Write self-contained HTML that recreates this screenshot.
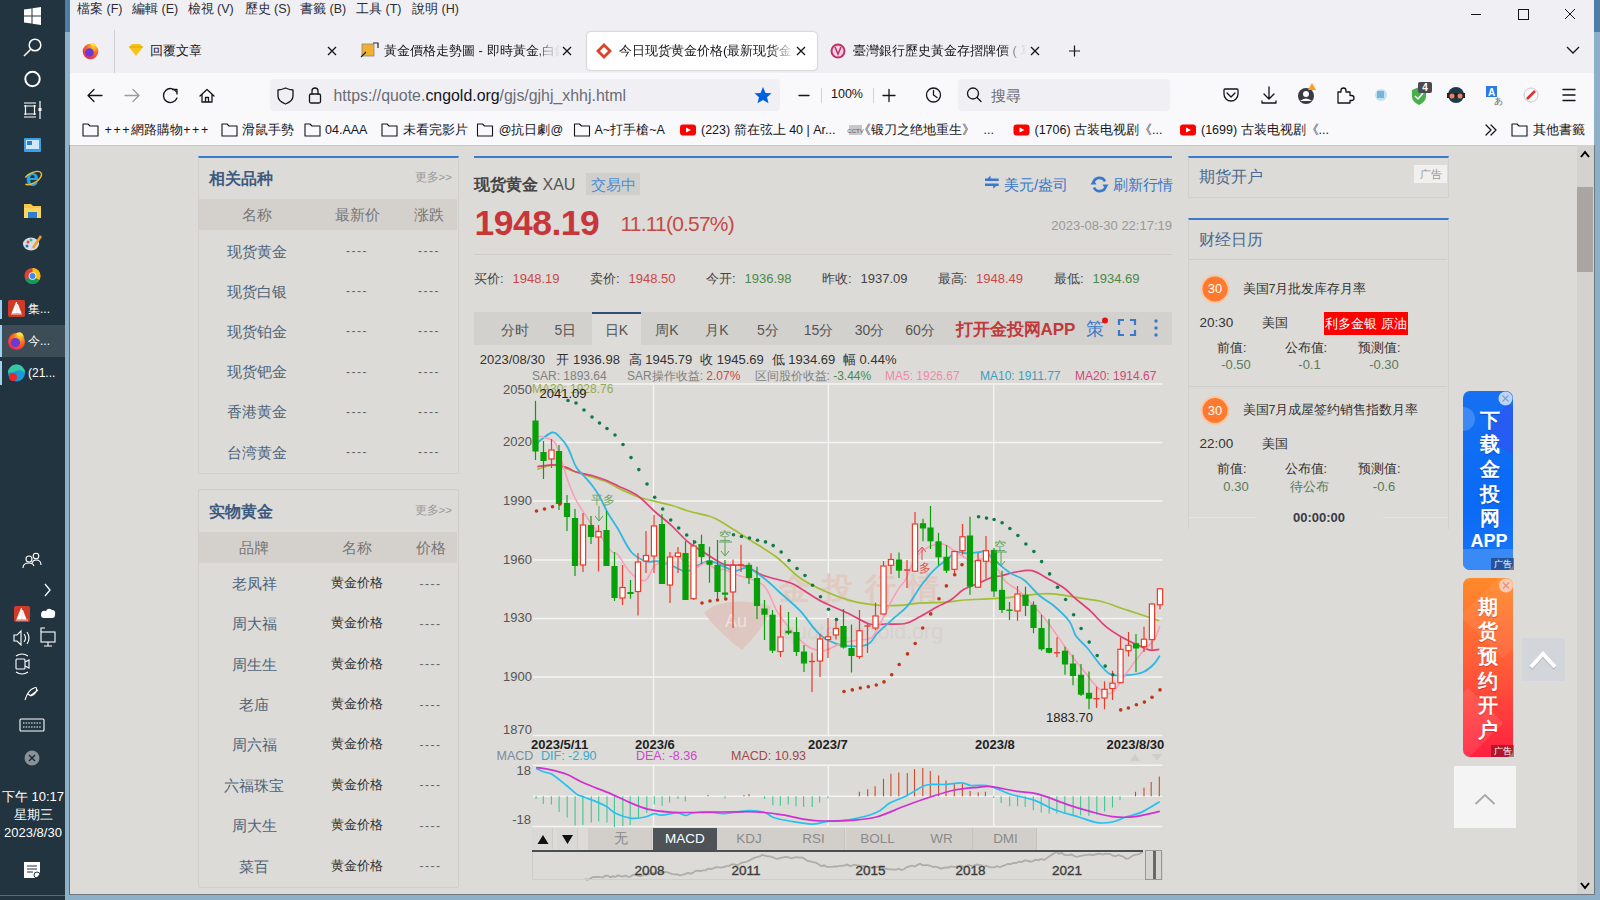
<!DOCTYPE html>
<html><head><meta charset="utf-8"><title>recreation</title>
<style>
html,body{margin:0;padding:0;width:1600px;height:900px;overflow:hidden;background:#dcdbd7;font-family:"Liberation Sans", sans-serif;}
.t{position:absolute;white-space:nowrap;font-family:"Liberation Sans", sans-serif;}
.r{position:absolute;}
</style></head><body>
<div class="r" style="left:0px;top:0px;width:65px;height:900px;background:#213440;"></div>
<div class="r" style="left:65px;top:0px;width:5px;height:900px;background:#8fb1c7;"></div>
<div class="r" style="left:65px;top:0px;width:5px;height:32px;background:#4c7ea6;"></div>
<div class="r" style="left:69px;top:145px;width:1px;height:749px;background:#5a6a74;"></div>
<svg style="position:absolute;left:0;top:0" width="70" height="900">
<g fill="#fff">
<path d="M24,9.5 L31.5,8.5 V15.5 H24 Z M32.5,8.3 L41,7 V15.5 H32.5 Z M24,16.5 H31.5 V23.5 L24,22.5 Z M32.5,16.5 H41 V25 L32.5,23.7 Z"/>
</g>
<g fill="none" stroke="#fff" stroke-width="1.5">
<circle cx="35" cy="45" r="5.8"/><path d="M30.8,49.2 L24,56"/>
<circle cx="32.5" cy="79" r="7.2" stroke-width="2"/>
<path d="M24,103 H36 M24,117 H36 M25.5,105 V115 M34.5,105 V115 M24,106 H36 M24,114 H36" stroke-width="1.2"/>
<path d="M40,101 V119" stroke-width="1.2"/><rect x="38.5" y="108" width="3" height="3" fill="#fff" stroke="none"/>
</g>
<!-- control panel icon -->
<rect x="24" y="138" width="17" height="14" rx="1" fill="#3ba0e6"/><rect x="26" y="140" width="13" height="9" fill="#cfe8fb"/><rect x="27" y="141" width="5" height="4" fill="#2a7fc8"/>
<!-- IE -->
<text x="32.5" y="186" font-family="Liberation Sans" font-size="23" font-weight="bold" fill="#2aa6e6" text-anchor="middle">e</text>
<ellipse cx="32.5" cy="178" rx="10" ry="5" transform="rotate(-30 32.5 178)" fill="none" stroke="#f0c030" stroke-width="1.4" stroke-dasharray="22 8"/>
<!-- folder -->
<path d="M24,204 H31 L33,206 H41 V218 H24 Z" fill="#f6c84a"/><rect x="24" y="208" width="17" height="10" fill="#fbd760"/><rect x="28" y="212" width="9" height="6" fill="#2f7fd0"/>
<!-- paint -->
<ellipse cx="31" cy="244" rx="8" ry="6.5" fill="#d8dde2"/><circle cx="28" cy="242" r="1.5" fill="#e44"/><circle cx="31" cy="240" r="1.5" fill="#3b8"/><circle cx="27" cy="246" r="1.5" fill="#36c"/><path d="M33,248 L41,236" stroke="#e8a030" stroke-width="2.5"/>
<!-- chrome -->
<circle cx="32.5" cy="276" r="8" fill="#db4437"/><path d="M32.5,276 L25.6,280 A8,8 0 0 0 39.4,280 Z" fill="#0f9d58"/><path d="M32.5,268 A8,8 0 0 1 39.4,280 L32.5,276 Z" fill="#f4c20d"/><circle cx="32.5" cy="276" r="3.8" fill="#fff"/><circle cx="32.5" cy="276" r="3" fill="#4285f4"/>
</svg>
<div class="r" style="left:0px;top:300px;width:2px;height:19px;background:#9fd0f0;"></div>
<div class="r" style="left:0px;top:325px;width:65px;height:32px;background:#3c4d58;"></div>
<div class="r" style="left:0px;top:325px;width:2px;height:32px;background:#9fd0f0;"></div>
<div class="r" style="left:0px;top:361px;width:2px;height:24px;background:#9fd0f0;"></div>
<svg style="position:absolute;left:0;top:0" width="70" height="900">
<rect x="8" y="300" width="17" height="17" rx="2" fill="#d23a28"/><path d="M11,314 H22 M16.5,302 V313 L12,313 Z M17.5,304 L21,313 H17.5 Z" fill="#fff" stroke="#fff" stroke-width="0.8"/>
<defs><radialGradient id="ffg2" cx="0.7" cy="0.2" r="0.9"><stop offset="0" stop-color="#ffd030"/><stop offset="0.45" stop-color="#ff6a20"/><stop offset="1" stop-color="#e8205a"/></radialGradient></defs>
<circle cx="16.5" cy="341.5" r="8.5" fill="url(#ffg2)"/><circle cx="15.5" cy="342.5" r="4.6" fill="#6a3ad8"/><path d="M16,333.5 Q22,330 24,337 Q21,335 18,336 Z" fill="#ffe040"/>
<circle cx="16.5" cy="373" r="8.5" fill="#1a9ad8"/><path d="M8,373 A8.5,8.5 0 0 1 25,373 Q20,368 14,372 Z" fill="#36c8a0"/><circle cx="13" cy="377" r="4" fill="#e8282a"/>
</svg>
<div class="t" style="top:301.0px;font-size:12px;line-height:16px;color:#fff;left:28.0px;">集...</div>
<div class="t" style="top:333.0px;font-size:12px;line-height:16px;color:#fff;left:28.0px;">今...</div>
<div class="t" style="top:365.0px;font-size:12px;line-height:16px;color:#fff;left:28.0px;">(21...</div>
<svg style="position:absolute;left:0;top:0" width="70" height="900">
<g fill="none" stroke="#fff" stroke-width="1.1">
<circle cx="29" cy="559" r="3"/><path d="M23,568 Q23,563 29,563 Q33,563 34,566"/><circle cx="36" cy="556" r="2.8"/><path d="M32,563 Q33,560 36,560 Q41,560 41,565"/>
<path d="M45,584 L50,590 L45,596" stroke-width="1.3"/>
<path d="M14,635 H17 L21,631 V645 L17,641 H14 Z"/><path d="M24,634 Q27,638 24,642 M27,632 Q31,638 27,644"/>
<rect x="41" y="632" width="14" height="10"/><path d="M48,642 V646 M44,646 H52 M41,632 V628 H45"/>
<path d="M16,656 Q22,652 28,656 M16,672 Q22,676 28,672"/><rect x="16" y="659" width="9" height="10" rx="1"/><path d="M25,662 L29,660 V668 L25,666"/>
<path d="M25,700 Q28,690 34,688 Q38,686 36,692 Q32,698 28,694 M30,696 L38,690"/>
<rect x="20" y="719" width="24" height="12" rx="1"/><path d="M23,723 H41 M23,727 H41" stroke-dasharray="1.5 1.2"/>
</g>
<path d="M41,615 Q41,610 46,611 Q48,607 52,610 Q56,610 55,615 Q55,618 52,618 H44 Q41,618 41,615 Z" fill="#fff"/>
<rect x="14" y="606" width="16" height="16" rx="2" fill="#d23a28"/><path d="M21.5,608 V619 L17,619 Z M22.5,610 L26,619 H22.5 Z M16,620 H28" fill="#fff" stroke="#fff" stroke-width="0.8"/>
<circle cx="32" cy="758" r="7.5" fill="#8a9298"/><path d="M29,755 L35,761 M35,755 L29,761" stroke="#1f313e" stroke-width="1.6"/>
<path d="M24,862 H40 V874 L36,878 H24 Z" fill="#fff"/><path d="M27,866 H37 M27,869 H37 M27,872 H33" stroke="#1f313e" stroke-width="1"/><circle cx="37" cy="875" r="3" fill="none" stroke="#1f313e" stroke-width="1"/>
</svg>
<div class="t" style="top:788.0px;font-size:13px;line-height:18px;color:#fff;left:-267.0px;width:600px;text-align:center;">下午 10:17</div>
<div class="t" style="top:806.0px;font-size:13px;line-height:18px;color:#fff;left:-267.0px;width:600px;text-align:center;">星期三</div>
<div class="t" style="top:824.0px;font-size:13px;line-height:18px;color:#fff;left:-267.0px;width:600px;text-align:center;">2023/8/30</div>
<div class="r" style="left:0px;top:895px;width:65px;height:1px;background:#5a6a74;"></div>
<div class="r" style="left:70px;top:0px;width:1524px;height:73px;background:#f0f0f4;"></div>
<div class="r" style="left:70px;top:73px;width:1524px;height:72px;background:#f9f9fb;"></div>
<div class="r" style="left:1594px;top:0px;width:6px;height:900px;background:#8db0c8;"></div>
<div class="r" style="left:1594px;top:0px;width:6px;height:32px;background:#4c7ea6;"></div>
<div class="r" style="left:70px;top:894px;width:1530px;height:6px;background:#8db0c8;"></div>
<div class="r" style="left:69px;top:894px;width:1526px;height:1px;background:#707880;"></div>
<div class="t" style="top:1.0px;font-size:12.5px;line-height:17px;color:#2b2a33;left:77.0px;">檔案 (F)</div>
<div class="t" style="top:1.0px;font-size:12.5px;line-height:17px;color:#2b2a33;left:132.0px;">編輯 (E)</div>
<div class="t" style="top:1.0px;font-size:12.5px;line-height:17px;color:#2b2a33;left:187.5px;">檢視 (V)</div>
<div class="t" style="top:1.0px;font-size:12.5px;line-height:17px;color:#2b2a33;left:244.5px;">歷史 (S)</div>
<div class="t" style="top:1.0px;font-size:12.5px;line-height:17px;color:#2b2a33;left:300.0px;">書籤 (B)</div>
<div class="t" style="top:1.0px;font-size:12.5px;line-height:17px;color:#2b2a33;left:356.0px;">工具 (T)</div>
<div class="t" style="top:1.0px;font-size:12.5px;line-height:17px;color:#2b2a33;left:412.0px;">說明 (H)</div>
<svg style="position:absolute;left:0;top:0" width="1600" height="150">
<g fill="none" stroke="#15141a" stroke-width="1">
<path d="M1471,14.5 H1481"/><rect x="1518.5" y="9.5" width="10" height="10"/><path d="M1565,9 L1575,19 M1575,9 L1565,19"/>
<path d="M1567,47 L1573,53 L1579,47" stroke-width="1.3"/>
<path d="M1069,51 H1080 M1074.5,45.5 V56.5" stroke-width="1.2"/>
</g>
<!-- firefox icon -->
<defs><radialGradient id="ffg" cx="0.7" cy="0.2" r="0.9"><stop offset="0" stop-color="#ffd030"/><stop offset="0.45" stop-color="#ff6a20"/><stop offset="1" stop-color="#e8205a"/></radialGradient></defs>
<circle cx="90.5" cy="51.5" r="7.8" fill="url(#ffg)"/><circle cx="89.5" cy="52.5" r="4.3" fill="#6a3ad8"/><path d="M90,44 Q95,41 97,47 Q94,45 92,46 Z" fill="#ffe040"/>
<line x1="114.5" y1="30" x2="114.5" y2="73" stroke="#d0d0d6"/>
</svg>
<div class="r" style="left:587px;top:32px;width:230px;height:38px;background:#fff;border-radius:4px;box-shadow:0 0 2px rgba(0,0,0,0.35)"></div>
<svg style="position:absolute;left:0;top:0" width="1600" height="150">
<path d="M129,47 L132,44 H140 L143,47 L136,56 Z" fill="#f5c518"/><path d="M129,47 H143" stroke="#e0a000" stroke-width="0.8"/>
<rect x="362" y="44" width="12" height="12" fill="#f0b030" stroke="#888" stroke-width="0.8"/><path d="M361,57 L366,52 M373,43 L378,43 L378,48" stroke="#222" stroke-width="1.2" fill="none"/>
<path d="M604,43 L612,51 L604,59 L596,51 Z" fill="#d8452a"/><path d="M604,47 L608,51 L604,55 L600,51 Z" fill="#fff"/>
<circle cx="838" cy="51" r="7.5" fill="#c0306a"/><circle cx="838" cy="51" r="5.5" fill="#f6d0e0"/><path d="M835,47 L838,54 L841,47" stroke="#c0306a" stroke-width="1.5" fill="none"/>
<g stroke="#15141a" stroke-width="1.3">
<path d="M328,47 L336,55 M336,47 L328,55"/>
<path d="M563,47 L571,55 M571,47 L563,55"/>
<path d="M797,47 L805,55 M805,47 L797,55"/>
<path d="M1031,47 L1039,55 M1039,47 L1031,55"/>
</g>
</svg>
<div class="t" style="top:42.0px;font-size:13px;line-height:18px;color:#15141a;left:150.0px;">回覆文章</div>
<div class="t" style="left:384px;top:42px;width:176px;overflow:hidden;font-size:13px;line-height:18px;color:#15141a;-webkit-mask-image:linear-gradient(90deg,#000 85%,transparent)">黃金價格走勢圖 - 即時黃金,白銀價格</div>
<div class="t" style="left:619px;top:42px;width:176px;overflow:hidden;font-size:13px;line-height:18px;color:#15141a;-webkit-mask-image:linear-gradient(90deg,#000 85%,transparent)">今日现货黄金价格(最新现货金行情</div>
<div class="t" style="left:853px;top:42px;width:174px;overflow:hidden;font-size:13px;line-height:18px;color:#15141a;-webkit-mask-image:linear-gradient(90deg,#000 85%,transparent)">臺灣銀行歷史黃金存摺牌價 ( 單位</div>
<div class="r" style="left:270px;top:79px;width:510px;height:32px;background:#f0f0f4;border-radius:4px"></div>
<div class="r" style="left:958px;top:79px;width:212px;height:32px;background:#f0f0f4;border-radius:4px"></div>
<svg style="position:absolute;left:0;top:0" width="1600" height="150">
<g fill="none" stroke="#15141a" stroke-width="1.3" stroke-linecap="round" stroke-linejoin="round">
<path d="M102,95.5 H88 M94,89.5 L88,95.5 L94,101.5"/>
<path d="M125,95.5 H139 M133,89.5 L139,95.5 L133,101.5" stroke="#9a9aa0"/>
<path d="M176.5,92 A7,7 0 1 0 177,98" /><path d="M172.5,89.5 H177 V94"/>
<path d="M200,96 L207,89.5 L214,96 M202,94.5 V102 H212 V94.5 M205.5,102 V97.5 H208.5 V102"/>
<path d="M285.5,88 Q290,90 293,90 V96 Q293,101 285.5,104 Q278,101 278,96 V90 Q281,90 285.5,88 Z"/>
<rect x="309.5" y="94" width="11" height="9" rx="1.5"/><path d="M312,94 V91 A3,3 0 0 1 318,91 V94"/>
<path d="M799,95.5 H809"/>
<path d="M883,95.5 H895 M889,89.5 V101.5"/>
<circle cx="933.5" cy="95" r="7"/><path d="M933.5,90.5 V95 L937,97.5"/>
<circle cx="973" cy="93.5" r="5.5"/><path d="M977,97.5 L981,101.5"/>
<path d="M1225,89 H1237 Q1238,89 1238,90 V94 A6.5,6.5 0 0 1 1224,94 V90 Q1224,89 1225,89 Z M1227,93 L1231,97 L1235,93"/>
<path d="M1269,87 V99 M1264,94 L1269,99 L1274,94 M1262,101 V103 H1276 V101"/>
<path d="M1338,103 V92 H1341 V90.5 A2.5,2.5 0 0 1 1346,90.5 V92 H1350 V95.5 H1351.5 A2.5,2.5 0 0 1 1351.5,100.5 H1350 V103 Z"/>
<path d="M1563,89.5 H1575 M1563,95 H1575 M1563,100.5 H1575" stroke-width="1.4"/>
<path d="M1486,125 L1491,130 L1486,135 M1491,125 L1496,130 L1491,135"/>
</g>
<path d="M763,87 L765.5,93 L771.5,93.3 L767,97.3 L768.5,103.3 L763,100 L757.5,103.3 L759,97.3 L754.5,93.3 L760.5,93 Z" fill="#0061e0"/>
<line x1="821.5" y1="88" x2="821.5" y2="103" stroke="#d0d0d6"/><line x1="873.5" y1="88" x2="873.5" y2="103" stroke="#d0d0d6"/>
<!-- account with orange -->
<circle cx="1306" cy="96" r="8" fill="#3a3a44"/><circle cx="1306" cy="94" r="3" fill="#f9f9fb"/><path d="M1300,101 Q1306,96 1312,101" fill="#f9f9fb"/><path d="M1312,83 L1316,90 H1308 Z" fill="#ff9a1a"/>
<!-- translate ghost -->
<circle cx="1381" cy="95" r="6" fill="#9fd0e8" opacity="0.6"/><rect x="1377" y="91" width="7" height="7" fill="#5aa0d8" opacity="0.7"/>
<!-- shield green -->
<path d="M1419,87 L1426,90 V96 Q1426,102 1419,105 Q1412,102 1412,96 V90 Z" fill="#46b04a"/><path d="M1415,96 L1418,99 L1423,93" stroke="#fff" stroke-width="1.5" fill="none"/>
<rect x="1418" y="82" width="14" height="11" rx="2" fill="#4a4a50"/><text x="1425" y="91" font-family="Liberation Sans" font-size="10" font-weight="bold" fill="#fff" text-anchor="middle">4</text>
<!-- spy -->
<circle cx="1456" cy="95" r="8" fill="#1a3a4a"/><rect x="1447" y="93" width="18" height="5" fill="#222"/><circle cx="1452" cy="96" r="2.5" fill="#f08060"/><circle cx="1460" cy="96" r="2.5" fill="#f08060"/>
<!-- A translate -->
<rect x="1486" y="86" width="11" height="11" fill="#2a7ae8"/><text x="1491.5" y="95.5" font-family="Liberation Sans" font-size="10" font-weight="bold" fill="#fff" text-anchor="middle">A</text><text x="1498" y="104" font-family="Liberation Sans" font-size="9" fill="#666" text-anchor="middle">あ</text>
<!-- compass -->
<circle cx="1531" cy="95" r="7" fill="none" stroke="#c8c8d0" stroke-width="1"/><path d="M1527,99 L1535,91" stroke="#e03030" stroke-width="2.5"/>
</svg>
<div class="t" style="left:333.5px;top:85.5px;font-size:15.9px;line-height:20px;color:#6b6b74">https://quote.<span style="color:#15141a">cngold.org</span>/gjs/gjhj_xhhj.html</div>
<div class="t" style="top:86.0px;font-size:12.5px;line-height:17px;color:#15141a;left:831.0px;">100%</div>
<div class="t" style="top:84.5px;font-size:15px;line-height:21px;color:#6b6b74;left:991.0px;">搜尋</div>
<svg style="position:absolute;left:0;top:0" width="1600" height="150"><path d="M83,124 H88 L90,126 H98 V136 H83 Z" fill="none" stroke="#15141a" stroke-width="1.1" stroke-linejoin="round"/><path d="M222,124 H227 L229,126 H237 V136 H222 Z" fill="none" stroke="#15141a" stroke-width="1.1" stroke-linejoin="round"/><path d="M305,124 H310 L312,126 H320 V136 H305 Z" fill="none" stroke="#15141a" stroke-width="1.1" stroke-linejoin="round"/><path d="M382,124 H387 L389,126 H397 V136 H382 Z" fill="none" stroke="#15141a" stroke-width="1.1" stroke-linejoin="round"/><path d="M477.5,124 H482.5 L484.5,126 H492.5 V136 H477.5 Z" fill="none" stroke="#15141a" stroke-width="1.1" stroke-linejoin="round"/><path d="M574.5,124 H579.5 L581.5,126 H589.5 V136 H574.5 Z" fill="none" stroke="#15141a" stroke-width="1.1" stroke-linejoin="round"/><path d="M1512,124 H1517 L1519,126 H1527 V136 H1512 Z" fill="none" stroke="#15141a" stroke-width="1.1" stroke-linejoin="round"/><rect x="680" y="124.5" width="16" height="11" rx="3" fill="#ff0000"/><path d="M686,127.5 L691,130 L686,132.5 Z" fill="#fff"/><rect x="1013.5" y="124.5" width="16" height="11" rx="3" fill="#ff0000"/><path d="M1019.5,127.5 L1024.5,130 L1019.5,132.5 Z" fill="#fff"/><rect x="1180" y="124.5" width="16" height="11" rx="3" fill="#ff0000"/><path d="M1186,127.5 L1191,130 L1186,132.5 Z" fill="#fff"/><rect x="849" y="125" width="13" height="10" fill="#c8c8cc"/><text x="855.5" y="133" font-size="6" text-anchor="middle" fill="#555" font-family="Liberation Sans">CCTV</text></svg>
<div class="t" style="top:121.5px;font-size:12.5px;line-height:17px;color:#15141a;left:104.5px;"><span style="letter-spacing:1.6px">+++</span>網路購物<span style="letter-spacing:1.6px">++</span>+</div>
<div class="t" style="top:121.5px;font-size:12.5px;line-height:17px;color:#15141a;left:242.0px;">滑鼠手勢</div>
<div class="t" style="top:121.5px;font-size:12.5px;line-height:17px;color:#15141a;left:325.0px;">04.AAA</div>
<div class="t" style="top:121.5px;font-size:12.5px;line-height:17px;color:#15141a;left:402.5px;">未看完影片</div>
<div class="t" style="top:121.5px;font-size:12.5px;line-height:17px;color:#15141a;left:498.8px;">@抗日劇@</div>
<div class="t" style="top:121.5px;font-size:12.5px;line-height:17px;color:#15141a;left:594.5px;">A~打手槍~A</div>
<div class="t" style="top:121.5px;font-size:12.5px;line-height:17px;color:#15141a;left:701.0px;">(223) 箭在弦上 40 | Ar...</div>
<div class="t" style="top:121.5px;font-size:12.5px;line-height:17px;color:#15141a;left:858.0px;">《锻刀之绝地重生》</div>
<div class="t" style="top:121.5px;font-size:12.5px;line-height:17px;color:#15141a;left:983.5px;">...</div>
<div class="t" style="top:121.5px;font-size:12.5px;line-height:17px;color:#15141a;left:1034.5px;">(1706) 古装电视剧《...</div>
<div class="t" style="top:121.5px;font-size:12.5px;line-height:17px;color:#15141a;left:1201.0px;">(1699) 古装电视剧《...</div>
<div class="t" style="top:121.5px;font-size:12.5px;line-height:17px;color:#15141a;left:1532.5px;">其他書籤</div>
<div class="r" style="left:70px;top:145px;width:1507px;height:749px;background:#dcdbd7;"></div>
<div class="r" style="left:70px;top:145px;width:1507px;height:1px;background:#c8c6c2;"></div>
<div class="r" style="left:1577px;top:145px;width:17px;height:749px;background:#d4d2ce;"></div>
<div class="r" style="left:1577px;top:187px;width:16px;height:85px;background:#a9a5a0;"></div>
<div class="r" style="left:1594px;top:145px;width:1px;height:749px;background:#6a7880;"></div>
<svg style="position:absolute;left:0;top:0" width="1600" height="900">
<path d="M1581,157 L1585,152 L1589,157" fill="none" stroke="#000" stroke-width="2"/>
<path d="M1581,883 L1585,888 L1589,883" fill="none" stroke="#000" stroke-width="2"/>
</svg>
<div class="r" style="left:198px;top:156px;width:259px;height:315px;border:1px solid #d2d0cc;border-top:2px solid #3b7bd0"></div>
<div class="t" style="top:167.5px;font-size:16px;line-height:22px;color:#3c5a80;font-weight:bold;left:208.5px;">相关品种</div>
<div class="t" style="top:169.0px;font-size:11.5px;line-height:16px;color:#9a9a9a;left:414.5px;">更多&gt;&gt;</div>
<div class="r" style="left:199px;top:199px;width:258px;height:31px;background:#d4d1cd;"></div>
<div class="t" style="top:204.0px;font-size:15px;line-height:21px;color:#777;left:-43.0px;width:600px;text-align:center;">名称</div>
<div class="t" style="top:204.0px;font-size:15px;line-height:21px;color:#777;left:57.0px;width:600px;text-align:center;">最新价</div>
<div class="t" style="top:204.0px;font-size:15px;line-height:21px;color:#777;left:129.0px;width:600px;text-align:center;">涨跌</div>
<div class="t" style="top:240.5px;font-size:15px;line-height:21px;color:#4f6479;left:-43.0px;width:600px;text-align:center;">现货黄金</div>
<div class="t" style="top:243.0px;font-size:12px;line-height:16px;color:#666;left:57.0px;width:600px;text-align:center;letter-spacing:1.5px">----</div>
<div class="t" style="top:243.0px;font-size:12px;line-height:16px;color:#666;left:129.0px;width:600px;text-align:center;letter-spacing:1.5px">----</div>
<div class="t" style="top:280.7px;font-size:15px;line-height:21px;color:#4f6479;left:-43.0px;width:600px;text-align:center;">现货白银</div>
<div class="t" style="top:283.2px;font-size:12px;line-height:16px;color:#666;left:57.0px;width:600px;text-align:center;letter-spacing:1.5px">----</div>
<div class="t" style="top:283.2px;font-size:12px;line-height:16px;color:#666;left:129.0px;width:600px;text-align:center;letter-spacing:1.5px">----</div>
<div class="t" style="top:320.9px;font-size:15px;line-height:21px;color:#4f6479;left:-43.0px;width:600px;text-align:center;">现货铂金</div>
<div class="t" style="top:323.4px;font-size:12px;line-height:16px;color:#666;left:57.0px;width:600px;text-align:center;letter-spacing:1.5px">----</div>
<div class="t" style="top:323.4px;font-size:12px;line-height:16px;color:#666;left:129.0px;width:600px;text-align:center;letter-spacing:1.5px">----</div>
<div class="t" style="top:361.1px;font-size:15px;line-height:21px;color:#4f6479;left:-43.0px;width:600px;text-align:center;">现货钯金</div>
<div class="t" style="top:363.6px;font-size:12px;line-height:16px;color:#666;left:57.0px;width:600px;text-align:center;letter-spacing:1.5px">----</div>
<div class="t" style="top:363.6px;font-size:12px;line-height:16px;color:#666;left:129.0px;width:600px;text-align:center;letter-spacing:1.5px">----</div>
<div class="t" style="top:401.3px;font-size:15px;line-height:21px;color:#4f6479;left:-43.0px;width:600px;text-align:center;">香港黄金</div>
<div class="t" style="top:403.8px;font-size:12px;line-height:16px;color:#666;left:57.0px;width:600px;text-align:center;letter-spacing:1.5px">----</div>
<div class="t" style="top:403.8px;font-size:12px;line-height:16px;color:#666;left:129.0px;width:600px;text-align:center;letter-spacing:1.5px">----</div>
<div class="t" style="top:441.5px;font-size:15px;line-height:21px;color:#4f6479;left:-43.0px;width:600px;text-align:center;">台湾黄金</div>
<div class="t" style="top:444.0px;font-size:12px;line-height:16px;color:#666;left:57.0px;width:600px;text-align:center;letter-spacing:1.5px">----</div>
<div class="t" style="top:444.0px;font-size:12px;line-height:16px;color:#666;left:129.0px;width:600px;text-align:center;letter-spacing:1.5px">----</div>
<div class="r" style="left:198px;top:489px;width:259px;height:397px;border:1px solid #d0cec9;border-radius:2px"></div>
<div class="t" style="top:500.5px;font-size:16px;line-height:22px;color:#3c5a80;font-weight:bold;left:208.5px;">实物黄金</div>
<div class="t" style="top:502.0px;font-size:11.5px;line-height:16px;color:#9a9a9a;left:414.5px;">更多&gt;&gt;</div>
<div class="r" style="left:199px;top:532px;width:258px;height:31px;background:#d4d1cd;"></div>
<div class="t" style="top:537.0px;font-size:15px;line-height:21px;color:#777;left:-46.0px;width:600px;text-align:center;">品牌</div>
<div class="t" style="top:537.0px;font-size:15px;line-height:21px;color:#777;left:56.5px;width:600px;text-align:center;">名称</div>
<div class="t" style="top:537.0px;font-size:15px;line-height:21px;color:#777;left:130.5px;width:600px;text-align:center;">价格</div>
<div class="t" style="top:573.0px;font-size:15px;line-height:21px;color:#4f6479;left:-46.0px;width:600px;text-align:center;">老凤祥</div>
<div class="t" style="top:575.0px;font-size:12.5px;line-height:17px;color:#333;left:56.5px;width:600px;text-align:center;">黄金价格</div>
<div class="t" style="top:575.5px;font-size:12px;line-height:16px;color:#666;left:130.5px;width:600px;text-align:center;letter-spacing:1.5px">----</div>
<div class="t" style="top:613.4px;font-size:15px;line-height:21px;color:#4f6479;left:-46.0px;width:600px;text-align:center;">周大福</div>
<div class="t" style="top:615.4px;font-size:12.5px;line-height:17px;color:#333;left:56.5px;width:600px;text-align:center;">黄金价格</div>
<div class="t" style="top:615.9px;font-size:12px;line-height:16px;color:#666;left:130.5px;width:600px;text-align:center;letter-spacing:1.5px">----</div>
<div class="t" style="top:653.7px;font-size:15px;line-height:21px;color:#4f6479;left:-46.0px;width:600px;text-align:center;">周生生</div>
<div class="t" style="top:655.7px;font-size:12.5px;line-height:17px;color:#333;left:56.5px;width:600px;text-align:center;">黄金价格</div>
<div class="t" style="top:656.2px;font-size:12px;line-height:16px;color:#666;left:130.5px;width:600px;text-align:center;letter-spacing:1.5px">----</div>
<div class="t" style="top:694.0px;font-size:15px;line-height:21px;color:#4f6479;left:-46.0px;width:600px;text-align:center;">老庙</div>
<div class="t" style="top:696.0px;font-size:12.5px;line-height:17px;color:#333;left:56.5px;width:600px;text-align:center;">黄金价格</div>
<div class="t" style="top:696.5px;font-size:12px;line-height:16px;color:#666;left:130.5px;width:600px;text-align:center;letter-spacing:1.5px">----</div>
<div class="t" style="top:734.4px;font-size:15px;line-height:21px;color:#4f6479;left:-46.0px;width:600px;text-align:center;">周六福</div>
<div class="t" style="top:736.4px;font-size:12.5px;line-height:17px;color:#333;left:56.5px;width:600px;text-align:center;">黄金价格</div>
<div class="t" style="top:736.9px;font-size:12px;line-height:16px;color:#666;left:130.5px;width:600px;text-align:center;letter-spacing:1.5px">----</div>
<div class="t" style="top:774.8px;font-size:15px;line-height:21px;color:#4f6479;left:-46.0px;width:600px;text-align:center;">六福珠宝</div>
<div class="t" style="top:776.8px;font-size:12.5px;line-height:17px;color:#333;left:56.5px;width:600px;text-align:center;">黄金价格</div>
<div class="t" style="top:777.2px;font-size:12px;line-height:16px;color:#666;left:130.5px;width:600px;text-align:center;letter-spacing:1.5px">----</div>
<div class="t" style="top:815.1px;font-size:15px;line-height:21px;color:#4f6479;left:-46.0px;width:600px;text-align:center;">周大生</div>
<div class="t" style="top:817.1px;font-size:12.5px;line-height:17px;color:#333;left:56.5px;width:600px;text-align:center;">黄金价格</div>
<div class="t" style="top:817.6px;font-size:12px;line-height:16px;color:#666;left:130.5px;width:600px;text-align:center;letter-spacing:1.5px">----</div>
<div class="t" style="top:855.5px;font-size:15px;line-height:21px;color:#4f6479;left:-46.0px;width:600px;text-align:center;">菜百</div>
<div class="t" style="top:857.5px;font-size:12.5px;line-height:17px;color:#333;left:56.5px;width:600px;text-align:center;">黄金价格</div>
<div class="t" style="top:858.0px;font-size:12px;line-height:16px;color:#666;left:130.5px;width:600px;text-align:center;letter-spacing:1.5px">----</div>
<svg width="1600" height="900" style="position:absolute;left:0;top:0">
<line x1="532.5" y1="384" x2="1162.5" y2="384" stroke="#f4f4f2" stroke-width="1.4"/>
<line x1="532.5" y1="442.5" x2="1162.5" y2="442.5" stroke="#f4f4f2" stroke-width="1.4"/>
<line x1="532.5" y1="501" x2="1162.5" y2="501" stroke="#f4f4f2" stroke-width="1.4"/>
<line x1="532.5" y1="560" x2="1162.5" y2="560" stroke="#f4f4f2" stroke-width="1.4"/>
<line x1="532.5" y1="618.5" x2="1162.5" y2="618.5" stroke="#f4f4f2" stroke-width="1.4"/>
<line x1="532.5" y1="677" x2="1162.5" y2="677" stroke="#f4f4f2" stroke-width="1.4"/>
<line x1="532.5" y1="735.5" x2="1162.5" y2="735.5" stroke="#f4f4f2" stroke-width="1.4"/>
<line x1="653.5" y1="384" x2="653.5" y2="735.5" stroke="#f4f4f2" stroke-width="1.4"/>
<line x1="828.3" y1="384" x2="828.3" y2="735.5" stroke="#f4f4f2" stroke-width="1.4"/>
<line x1="993.8" y1="384" x2="993.8" y2="735.5" stroke="#f4f4f2" stroke-width="1.4"/>
<line x1="532.5" y1="765.3" x2="1162.5" y2="765.3" stroke="#f4f4f2" stroke-width="1.4"/>
<line x1="532.5" y1="796.3" x2="1162.5" y2="796.3" stroke="#f4f4f2" stroke-width="1.4"/>
<line x1="532.5" y1="826.5" x2="1162.5" y2="826.5" stroke="#f4f4f2" stroke-width="1.4"/>
<line x1="653.5" y1="765.3" x2="653.5" y2="826.5" stroke="#f4f4f2" stroke-width="1.4"/>
<line x1="828.3" y1="765.3" x2="828.3" y2="826.5" stroke="#f4f4f2" stroke-width="1.4"/>
<line x1="993.8" y1="765.3" x2="993.8" y2="826.5" stroke="#f4f4f2" stroke-width="1.4"/>
<g>
<path d="M704,613 Q712,604 730,602 Q752,600 771,606 Q768,624 742,650 Q720,634 704,613 Z" fill="#ddc7c0"/>
<text x="725" y="627" font-family="Liberation Sans" font-size="18" fill="#ebe2de">Au</text>
<text x="779" y="599" font-family="Liberation Serif" font-size="31" font-weight="bold" fill="#e0cac2" letter-spacing="12">金投行情</text>
<text x="783" y="639" font-family="Liberation Sans" font-size="21.5" fill="#d6d2ce">quote.cngold.org</text>
</g>
<path d="M537.3,469.3 C540.2,468.6 548.2,464.9 554.7,465.3 C561.2,465.8 567.6,469.3 576.0,472.0 C584.4,474.7 598.3,478.6 605.3,481.3 C612.3,484.0 612.3,485.3 618.0,488.0 C623.7,490.7 630.4,494.4 639.3,497.3 C648.2,500.2 663.3,503.1 671.3,505.3 C679.3,507.5 681.1,508.9 687.3,510.7 C693.5,512.5 703.6,514.5 708.7,516.0 C713.8,517.5 714.2,518.0 718.0,520.0 C721.8,522.0 726.0,524.7 731.3,528.0 C736.6,531.3 742.4,535.1 750.0,540.0 C757.6,544.9 768.4,551.0 776.7,557.3 C785.0,563.6 791.7,572.2 800.0,578.0 C808.3,583.8 817.8,588.1 826.7,592.0 C835.6,595.9 844.4,599.1 853.3,601.3 C862.2,603.5 872.2,604.6 880.0,605.3 C887.8,606.0 893.5,605.6 900.0,605.3 C906.5,604.9 911.2,603.7 918.7,603.2 C926.2,602.7 937.8,602.6 945.3,602.1 C952.8,601.6 956.2,600.6 964.0,600.0 C971.8,599.4 984.2,599.2 992.0,598.7 C999.8,598.2 1003.2,598.1 1010.7,597.3 C1018.2,596.5 1029.8,594.6 1037.3,594.1 C1044.8,593.6 1048.2,593.3 1056.0,594.1 C1063.8,594.9 1076.5,597.5 1084.0,598.7 C1091.5,599.9 1093.5,599.4 1100.7,601.3 C1107.9,603.2 1117.5,606.9 1127.3,610.1 C1137.1,613.4 1154.0,619.0 1159.3,620.8" fill="none" stroke="#a0c030" stroke-width="1.7"/>
<path d="M537.3,466.7 C540.2,466.4 549.6,464.6 554.7,464.8 C559.8,465.0 564.5,466.8 568.0,468.0 C571.5,469.2 572.0,470.8 576.0,472.0 C580.0,473.2 587.1,474.2 592.0,475.5 C596.9,476.8 601.0,478.3 605.3,480.0 C609.6,481.7 612.5,483.2 618.0,485.9 C623.5,488.6 631.8,491.6 638.0,496.0 C644.2,500.4 649.8,507.1 655.3,512.0 C660.8,516.9 666.0,520.4 671.3,525.3 C676.6,530.2 682.0,536.8 687.3,541.3 C692.6,545.8 698.2,548.7 703.3,552.0 C708.4,555.3 714.2,559.2 718.0,561.3 C721.8,563.4 721.5,564.0 726.0,564.8 C730.5,565.6 738.5,564.1 744.7,565.9 C750.9,567.7 755.8,572.7 763.3,575.5 C770.8,578.3 783.9,580.6 790.0,582.7 C796.1,584.8 794.8,584.9 800.0,588.0 C805.2,591.1 813.3,597.1 821.3,601.3 C829.3,605.5 840.0,609.5 848.0,613.3 C856.0,617.1 863.1,622.2 869.3,624.0 C875.5,625.8 879.3,624.1 885.3,624.0 C891.3,623.9 899.7,624.6 905.3,623.5 C910.9,622.4 913.4,620.1 918.7,617.3 C924.0,614.5 932.0,609.6 937.3,606.7 C942.6,603.8 946.2,602.9 950.7,600.0 C955.2,597.1 959.1,592.2 964.0,589.3 C968.9,586.4 975.3,584.7 980.0,582.7 C984.7,580.7 988.7,578.4 992.0,577.3 C995.3,576.2 996.0,576.9 1000.0,576.0 C1004.0,575.1 1010.7,572.9 1016.0,572.0 C1021.3,571.1 1026.7,569.6 1032.0,570.7 C1037.3,571.8 1042.7,575.8 1048.0,578.7 C1053.3,581.6 1059.7,584.9 1064.0,588.0 C1068.3,591.1 1069.7,593.5 1074.0,597.3 C1078.3,601.1 1084.7,605.8 1090.0,610.7 C1095.3,615.6 1100.7,622.3 1106.0,626.7 C1111.3,631.1 1116.7,634.2 1122.0,637.3 C1127.3,640.4 1133.3,643.2 1138.0,645.3 C1142.7,647.4 1146.5,649.4 1150.0,650.1 C1153.5,650.8 1157.8,649.4 1159.3,649.3" fill="none" stroke="#e0407a" stroke-width="1.7"/>
<path d="M537.3,442.7 C539.8,441.0 548.2,433.4 552.0,432.5 C555.8,431.6 557.3,434.7 560.0,437.3 C562.7,439.9 565.3,443.1 568.0,448.0 C570.7,452.9 573.3,462.0 576.0,466.7 C578.7,471.4 581.3,472.9 584.0,476.0 C586.7,479.1 589.3,481.8 592.0,485.3 C594.7,488.9 597.3,492.6 600.0,497.3 C602.7,502.0 605.0,508.0 608.0,513.3 C611.0,518.6 614.1,522.5 618.0,529.0 C621.9,535.5 626.6,546.6 631.3,552.0 C636.0,557.4 641.5,559.8 646.0,561.3 C650.5,562.8 653.8,560.6 658.0,561.3 C662.2,562.0 666.6,563.6 671.3,565.3 C676.0,567.0 681.5,571.5 686.0,571.5 C690.5,571.5 693.8,567.0 698.0,565.3 C702.2,563.6 705.3,560.4 711.3,561.3 C717.3,562.2 728.0,569.6 734.0,570.7 C740.0,571.8 742.2,566.7 747.3,568.0 C752.4,569.3 759.4,574.7 764.7,578.7 C770.0,582.7 773.4,586.7 779.3,592.0 C785.2,597.3 793.9,604.2 800.0,610.7 C806.1,617.2 811.5,625.9 816.0,630.7 C820.5,635.5 822.2,637.1 826.7,639.5 C831.2,641.9 836.0,644.4 842.7,645.3 C849.4,646.2 860.9,646.8 866.7,644.8 C872.5,642.8 872.9,637.6 877.3,633.3 C881.7,628.9 888.2,623.4 893.3,618.7 C898.4,614.0 903.3,610.9 908.0,605.3 C912.7,599.7 916.8,591.3 921.3,585.3 C925.8,579.3 930.2,573.7 934.7,569.3 C939.2,564.9 944.5,561.6 948.0,558.7 C951.5,555.8 952.9,552.9 956.0,552.0 C959.1,551.1 962.7,553.3 966.7,553.3 C970.7,553.3 976.9,552.3 980.0,552.0 C983.1,551.7 982.4,549.7 985.3,551.5 C988.2,553.3 993.1,559.1 997.3,562.7 C1001.5,566.3 1006.2,570.4 1010.7,573.3 C1015.2,576.2 1019.1,576.2 1024.0,580.0 C1028.9,583.8 1035.1,591.8 1040.0,596.0 C1044.9,600.2 1048.4,601.1 1053.3,605.3 C1058.2,609.5 1065.5,616.2 1069.3,621.3 C1073.1,626.4 1073.0,631.5 1076.0,636.0 C1079.0,640.5 1083.2,643.1 1087.3,648.0 C1091.4,652.9 1096.7,660.8 1100.7,665.3 C1104.7,669.8 1106.9,673.1 1111.3,674.7 C1115.7,676.4 1122.0,675.7 1127.3,675.2 C1132.6,674.8 1138.8,673.9 1143.3,672.0 C1147.8,670.1 1151.2,666.8 1154.0,664.0 C1156.8,661.2 1158.9,656.9 1159.9,655.5" fill="none" stroke="#30b8e0" stroke-width="1.8"/>
<path d="M537.3,436.0 C540.0,436.8 549.7,438.1 553.3,440.8 C556.9,443.5 556.2,445.3 558.7,452.0 C561.2,458.7 565.1,473.0 568.0,481.0 C570.9,489.0 573.3,494.7 576.0,500.0 C578.7,505.3 581.3,508.8 584.0,513.0 C586.7,517.2 589.3,521.4 592.0,525.0 C594.7,528.6 596.9,530.4 600.0,534.7 C603.1,539.0 607.7,547.4 610.7,550.7 C613.7,554.0 615.0,551.4 618.0,554.7 C621.0,558.0 624.9,566.5 628.7,570.7 C632.5,574.9 637.6,578.7 640.7,580.0 C643.8,581.3 644.9,581.2 647.3,578.7 C649.7,576.2 652.2,567.5 655.3,564.8 C658.4,562.1 662.4,564.4 666.0,562.7 C669.6,561.0 673.2,554.3 676.7,554.7 C680.2,555.1 683.8,563.3 687.3,565.3 C690.8,567.3 694.9,567.1 698.0,566.7 C701.1,566.3 702.7,562.0 706.0,562.7 C709.3,563.4 715.1,569.6 718.0,570.7 C720.9,571.8 720.2,568.6 723.3,569.3 C726.4,570.0 730.0,572.0 736.7,574.7 C743.4,577.4 756.6,579.3 763.3,585.3 C770.0,591.3 772.2,603.4 776.7,610.7 C781.2,618.0 786.1,624.4 790.0,629.3 C793.9,634.2 796.5,636.9 800.0,640.0 C803.5,643.1 806.7,646.2 810.7,648.0 C814.7,649.8 818.7,651.6 824.0,650.7 C829.3,649.8 836.9,644.5 842.7,642.7 C848.5,640.9 853.8,640.9 858.7,640.0 C863.6,639.1 868.0,640.8 872.0,637.3 C876.0,633.8 879.4,624.9 882.7,618.7 C886.0,612.5 889.1,605.3 892.0,600.0 C894.9,594.7 897.8,590.0 900.0,586.7 C902.2,583.4 902.6,584.9 905.3,580.0 C908.0,575.1 912.4,562.6 916.0,557.3 C919.6,552.0 922.2,550.2 926.7,548.0 C931.2,545.8 937.8,543.3 942.7,544.0 C947.6,544.7 951.1,549.1 956.0,552.0 C960.9,554.9 967.5,560.2 972.0,561.3 C976.5,562.4 978.9,558.0 982.7,558.7 C986.5,559.4 990.9,561.5 994.7,565.3 C998.5,569.1 1001.3,577.1 1005.3,581.3 C1009.3,585.5 1014.2,586.9 1018.7,590.7 C1023.2,594.5 1027.1,598.7 1032.0,604.0 C1036.9,609.3 1042.7,615.8 1048.0,622.7 C1053.3,629.6 1059.7,639.3 1064.0,645.3 C1068.3,651.3 1070.5,654.2 1074.0,658.7 C1077.5,663.2 1081.2,667.6 1084.7,672.0 C1088.2,676.4 1091.8,681.8 1095.3,685.3 C1098.8,688.8 1102.9,692.4 1106.0,693.3 C1109.1,694.2 1110.5,694.2 1114.0,690.7 C1117.5,687.2 1122.4,678.7 1127.3,672.0 C1132.2,665.3 1138.8,656.0 1143.3,650.7 C1147.8,645.4 1151.2,644.1 1154.0,640.0 C1156.8,635.9 1158.9,628.4 1159.9,626.1" fill="none" stroke="#ff9ab8" stroke-width="1.5"/>
<line x1="535.5" y1="400.8" x2="535.5" y2="460.0" stroke="#08a008" stroke-width="1.2"/>
<rect x="532.4" y="420.5" width="6.2" height="31.0" fill="#08a008"/>
<line x1="543.5" y1="441.0" x2="543.5" y2="479.0" stroke="#08a008" stroke-width="1.2"/>
<rect x="540.4" y="452.0" width="6.2" height="9.0" fill="#08a008"/>
<line x1="551.5" y1="439.0" x2="551.5" y2="468.0" stroke="#ee3a2a" stroke-width="1.2"/>
<rect x="548.9" y="450.0" width="5.2" height="9.0" fill="#fff" stroke="#ee3a2a" stroke-width="1.2"/>
<line x1="559.0" y1="445.0" x2="559.0" y2="510.0" stroke="#08a008" stroke-width="1.2"/>
<rect x="555.9" y="451.0" width="6.2" height="53.0" fill="#08a008"/>
<line x1="567.0" y1="495.0" x2="567.0" y2="531.0" stroke="#08a008" stroke-width="1.2"/>
<rect x="563.9" y="503.0" width="6.2" height="14.0" fill="#08a008"/>
<line x1="575.0" y1="509.0" x2="575.0" y2="576.0" stroke="#08a008" stroke-width="1.2"/>
<rect x="571.9" y="518.0" width="6.2" height="48.0" fill="#08a008"/>
<line x1="583.0" y1="513.0" x2="583.0" y2="572.0" stroke="#ee3a2a" stroke-width="1.2"/>
<rect x="580.4" y="525.0" width="5.2" height="40.0" fill="#fff" stroke="#ee3a2a" stroke-width="1.2"/>
<line x1="591.0" y1="516.0" x2="591.0" y2="544.0" stroke="#08a008" stroke-width="1.2"/>
<rect x="587.9" y="525.0" width="6.2" height="12.0" fill="#08a008"/>
<line x1="598.5" y1="525.0" x2="598.5" y2="571.5" stroke="#ee3a2a" stroke-width="1.2"/>
<rect x="595.9" y="531.5" width="5.2" height="5.5" fill="#fff" stroke="#ee3a2a" stroke-width="1.2"/>
<line x1="606.5" y1="511.0" x2="606.5" y2="566.0" stroke="#08a008" stroke-width="1.2"/>
<rect x="603.4" y="530.0" width="6.2" height="36.0" fill="#08a008"/>
<line x1="614.5" y1="552.0" x2="614.5" y2="601.0" stroke="#08a008" stroke-width="1.2"/>
<rect x="611.4" y="566.0" width="6.2" height="32.0" fill="#08a008"/>
<line x1="622.5" y1="565.0" x2="622.5" y2="605.0" stroke="#ee3a2a" stroke-width="1.2"/>
<rect x="619.9" y="587.5" width="5.2" height="10.5" fill="#fff" stroke="#ee3a2a" stroke-width="1.2"/>
<line x1="630.5" y1="580.0" x2="630.5" y2="598.7" stroke="#08a008" stroke-width="1.2"/>
<rect x="627.4" y="592.0" width="6.2" height="2.0" fill="#08a008"/>
<line x1="638.0" y1="553.0" x2="638.0" y2="615.5" stroke="#ee3a2a" stroke-width="1.2"/>
<rect x="635.4" y="562.0" width="5.2" height="29.5" fill="#fff" stroke="#ee3a2a" stroke-width="1.2"/>
<line x1="646.0" y1="531.0" x2="646.0" y2="573.0" stroke="#ee3a2a" stroke-width="1.2"/>
<rect x="643.4" y="555.5" width="5.2" height="5.5" fill="#fff" stroke="#ee3a2a" stroke-width="1.2"/>
<line x1="654.0" y1="515.0" x2="654.0" y2="573.0" stroke="#ee3a2a" stroke-width="1.2"/>
<rect x="651.4" y="526.0" width="5.2" height="30.0" fill="#fff" stroke="#ee3a2a" stroke-width="1.2"/>
<line x1="662.0" y1="514.0" x2="662.0" y2="584.0" stroke="#08a008" stroke-width="1.2"/>
<rect x="658.9" y="524.0" width="6.2" height="60.0" fill="#08a008"/>
<line x1="670.0" y1="552.0" x2="670.0" y2="603.0" stroke="#ee3a2a" stroke-width="1.2"/>
<rect x="667.4" y="557.0" width="5.2" height="28.0" fill="#fff" stroke="#ee3a2a" stroke-width="1.2"/>
<line x1="678.0" y1="547.0" x2="678.0" y2="573.0" stroke="#ee3a2a" stroke-width="1.2"/>
<rect x="675.4" y="553.0" width="5.2" height="3.5" fill="#fff" stroke="#ee3a2a" stroke-width="1.2"/>
<line x1="685.5" y1="541.0" x2="685.5" y2="600.0" stroke="#08a008" stroke-width="1.2"/>
<rect x="682.4" y="553.0" width="6.2" height="47.0" fill="#08a008"/>
<line x1="693.5" y1="540.0" x2="693.5" y2="600.0" stroke="#ee3a2a" stroke-width="1.2"/>
<rect x="690.9" y="546.0" width="5.2" height="52.700000000000045" fill="#fff" stroke="#ee3a2a" stroke-width="1.2"/>
<line x1="701.5" y1="534.7" x2="701.5" y2="564.0" stroke="#08a008" stroke-width="1.2"/>
<rect x="698.4" y="544.0" width="6.2" height="13.0" fill="#08a008"/>
<line x1="709.5" y1="546.7" x2="709.5" y2="582.7" stroke="#08a008" stroke-width="1.2"/>
<rect x="706.4" y="560.5" width="6.2" height="4.2999999999999545" fill="#08a008"/>
<line x1="717.5" y1="540.0" x2="717.5" y2="598.7" stroke="#08a008" stroke-width="1.2"/>
<rect x="714.4" y="565.0" width="6.2" height="27.0" fill="#08a008"/>
<line x1="725.0" y1="560.0" x2="725.0" y2="598.7" stroke="#08a008" stroke-width="1.2"/>
<rect x="721.9" y="592.5" width="6.2" height="2.2000000000000455" fill="#08a008"/>
<line x1="733.0" y1="559.5" x2="733.0" y2="628.0" stroke="#ee3a2a" stroke-width="1.2"/>
<rect x="730.4" y="565.3" width="5.2" height="26.700000000000045" fill="#fff" stroke="#ee3a2a" stroke-width="1.2"/>
<line x1="741.0" y1="544.8" x2="741.0" y2="572.0" stroke="#ee3a2a" stroke-width="1.2"/>
<line x1="737.9" y1="565.0" x2="744.1" y2="565.0" stroke="#ee3a2a" stroke-width="1.4"/>
<line x1="749.0" y1="562.7" x2="749.0" y2="584.0" stroke="#08a008" stroke-width="1.2"/>
<rect x="745.9" y="564.8" width="6.2" height="13.200000000000045" fill="#08a008"/>
<line x1="757.0" y1="566.7" x2="757.0" y2="619.0" stroke="#08a008" stroke-width="1.2"/>
<rect x="753.9" y="578.0" width="6.2" height="28.0" fill="#08a008"/>
<line x1="764.5" y1="600.0" x2="764.5" y2="640.0" stroke="#08a008" stroke-width="1.2"/>
<rect x="761.4" y="608.5" width="6.2" height="6.2000000000000455" fill="#08a008"/>
<line x1="772.5" y1="610.0" x2="772.5" y2="653.0" stroke="#08a008" stroke-width="1.2"/>
<rect x="769.4" y="614.7" width="6.2" height="36.0" fill="#08a008"/>
<line x1="780.5" y1="605.0" x2="780.5" y2="657.0" stroke="#ee3a2a" stroke-width="1.2"/>
<rect x="777.9" y="637.0" width="5.2" height="14.5" fill="#fff" stroke="#ee3a2a" stroke-width="1.2"/>
<line x1="788.5" y1="612.0" x2="788.5" y2="634.7" stroke="#08a008" stroke-width="1.2"/>
<rect x="785.4" y="630.7" width="6.2" height="2.599999999999909" fill="#08a008"/>
<line x1="796.5" y1="617.3" x2="796.5" y2="656.0" stroke="#08a008" stroke-width="1.2"/>
<rect x="793.4" y="632.0" width="6.2" height="20.0" fill="#08a008"/>
<line x1="804.0" y1="645.0" x2="804.0" y2="672.0" stroke="#08a008" stroke-width="1.2"/>
<rect x="800.9" y="651.5" width="6.2" height="12.0" fill="#08a008"/>
<line x1="812.0" y1="652.8" x2="812.0" y2="692.0" stroke="#ee3a2a" stroke-width="1.2"/>
<line x1="808.9" y1="661.5" x2="815.1" y2="661.5" stroke="#ee3a2a" stroke-width="1.4"/>
<line x1="820.0" y1="634.0" x2="820.0" y2="677.0" stroke="#ee3a2a" stroke-width="1.2"/>
<rect x="817.4" y="639.0" width="5.2" height="22.0" fill="#fff" stroke="#ee3a2a" stroke-width="1.2"/>
<line x1="828.0" y1="618.0" x2="828.0" y2="658.0" stroke="#ee3a2a" stroke-width="1.2"/>
<rect x="825.4" y="636.8" width="5.2" height="2.7000000000000455" fill="#fff" stroke="#ee3a2a" stroke-width="1.2"/>
<line x1="836.0" y1="618.0" x2="836.0" y2="639.5" stroke="#ee3a2a" stroke-width="1.2"/>
<rect x="833.4" y="628.5" width="5.2" height="6.5" fill="#fff" stroke="#ee3a2a" stroke-width="1.2"/>
<line x1="843.5" y1="609.0" x2="843.5" y2="648.5" stroke="#08a008" stroke-width="1.2"/>
<rect x="840.4" y="626.0" width="6.2" height="21.5" fill="#08a008"/>
<line x1="851.5" y1="624.5" x2="851.5" y2="672.5" stroke="#08a008" stroke-width="1.2"/>
<rect x="848.4" y="648.0" width="6.2" height="8.0" fill="#08a008"/>
<line x1="859.5" y1="610.0" x2="859.5" y2="659.0" stroke="#ee3a2a" stroke-width="1.2"/>
<rect x="856.9" y="630.7" width="5.2" height="25.799999999999955" fill="#fff" stroke="#ee3a2a" stroke-width="1.2"/>
<line x1="867.5" y1="624.0" x2="867.5" y2="653.0" stroke="#ee3a2a" stroke-width="1.2"/>
<line x1="864.4" y1="626.0" x2="870.6" y2="626.0" stroke="#ee3a2a" stroke-width="1.4"/>
<line x1="875.5" y1="602.7" x2="875.5" y2="630.0" stroke="#ee3a2a" stroke-width="1.2"/>
<rect x="872.9" y="616.0" width="5.2" height="12.0" fill="#fff" stroke="#ee3a2a" stroke-width="1.2"/>
<line x1="883.5" y1="561.0" x2="883.5" y2="614.7" stroke="#ee3a2a" stroke-width="1.2"/>
<rect x="880.9" y="566.0" width="5.2" height="48.0" fill="#fff" stroke="#ee3a2a" stroke-width="1.2"/>
<line x1="891.0" y1="553.3" x2="891.0" y2="573.9" stroke="#ee3a2a" stroke-width="1.2"/>
<rect x="888.4" y="559.5" width="5.2" height="5.7999999999999545" fill="#fff" stroke="#ee3a2a" stroke-width="1.2"/>
<line x1="899.0" y1="552.5" x2="899.0" y2="578.0" stroke="#08a008" stroke-width="1.2"/>
<rect x="895.9" y="559.5" width="6.2" height="11.200000000000045" fill="#08a008"/>
<line x1="907.0" y1="560.0" x2="907.0" y2="588.0" stroke="#ee3a2a" stroke-width="1.2"/>
<line x1="903.9" y1="570.0" x2="910.1" y2="570.0" stroke="#ee3a2a" stroke-width="1.4"/>
<line x1="915.0" y1="512.0" x2="915.0" y2="571.0" stroke="#ee3a2a" stroke-width="1.2"/>
<rect x="912.4" y="524.0" width="5.2" height="47.200000000000045" fill="#fff" stroke="#ee3a2a" stroke-width="1.2"/>
<line x1="923.0" y1="518.7" x2="923.0" y2="541.3" stroke="#08a008" stroke-width="1.2"/>
<rect x="919.9" y="523.2" width="6.2" height="5.2999999999999545" fill="#08a008"/>
<line x1="930.5" y1="506.0" x2="930.5" y2="549.0" stroke="#08a008" stroke-width="1.2"/>
<rect x="927.4" y="527.5" width="6.2" height="13.799999999999955" fill="#08a008"/>
<line x1="938.5" y1="532.8" x2="938.5" y2="565.3" stroke="#08a008" stroke-width="1.2"/>
<rect x="935.4" y="541.3" width="6.2" height="16.0" fill="#08a008"/>
<line x1="946.5" y1="545.0" x2="946.5" y2="573.0" stroke="#08a008" stroke-width="1.2"/>
<rect x="943.4" y="556.8" width="6.2" height="13.900000000000091" fill="#08a008"/>
<line x1="954.5" y1="550.7" x2="954.5" y2="576.0" stroke="#ee3a2a" stroke-width="1.2"/>
<rect x="951.9" y="551.5" width="5.2" height="17.799999999999955" fill="#fff" stroke="#ee3a2a" stroke-width="1.2"/>
<line x1="962.5" y1="524.0" x2="962.5" y2="554.7" stroke="#ee3a2a" stroke-width="1.2"/>
<rect x="959.9" y="536.8" width="5.2" height="13.900000000000091" fill="#fff" stroke="#ee3a2a" stroke-width="1.2"/>
<line x1="970.0" y1="516.8" x2="970.0" y2="594.7" stroke="#08a008" stroke-width="1.2"/>
<rect x="966.9" y="535.5" width="6.2" height="51.200000000000045" fill="#08a008"/>
<line x1="978.0" y1="553.0" x2="978.0" y2="588.0" stroke="#ee3a2a" stroke-width="1.2"/>
<rect x="975.4" y="560.5" width="5.2" height="26.700000000000045" fill="#fff" stroke="#ee3a2a" stroke-width="1.2"/>
<line x1="986.0" y1="536.0" x2="986.0" y2="578.7" stroke="#ee3a2a" stroke-width="1.2"/>
<rect x="983.4" y="550.7" width="5.2" height="10.599999999999909" fill="#fff" stroke="#ee3a2a" stroke-width="1.2"/>
<line x1="994.0" y1="548.0" x2="994.0" y2="597.0" stroke="#08a008" stroke-width="1.2"/>
<rect x="990.9" y="549.9" width="6.2" height="41.60000000000002" fill="#08a008"/>
<line x1="1002.0" y1="570.7" x2="1002.0" y2="613.0" stroke="#08a008" stroke-width="1.2"/>
<rect x="998.9" y="589.9" width="6.2" height="20.100000000000023" fill="#08a008"/>
<line x1="1009.5" y1="602.0" x2="1009.5" y2="620.0" stroke="#08a008" stroke-width="1.2"/>
<rect x="1006.4" y="609.5" width="6.2" height="1.5" fill="#08a008"/>
<line x1="1017.5" y1="586.0" x2="1017.5" y2="620.8" stroke="#ee3a2a" stroke-width="1.2"/>
<rect x="1014.9" y="594.0" width="5.2" height="17.0" fill="#fff" stroke="#ee3a2a" stroke-width="1.2"/>
<line x1="1025.5" y1="586.7" x2="1025.5" y2="616.0" stroke="#08a008" stroke-width="1.2"/>
<rect x="1022.4" y="594.7" width="6.2" height="11.199999999999932" fill="#08a008"/>
<line x1="1033.5" y1="601.3" x2="1033.5" y2="633.3" stroke="#08a008" stroke-width="1.2"/>
<rect x="1030.4" y="604.8" width="6.2" height="23.200000000000045" fill="#08a008"/>
<line x1="1041.5" y1="614.7" x2="1041.5" y2="650.7" stroke="#08a008" stroke-width="1.2"/>
<rect x="1038.4" y="628.0" width="6.2" height="21.299999999999955" fill="#08a008"/>
<line x1="1049.0" y1="618.7" x2="1049.0" y2="653.3" stroke="#08a008" stroke-width="1.2"/>
<rect x="1045.9" y="648.0" width="6.2" height="4.7999999999999545" fill="#08a008"/>
<line x1="1057.0" y1="637.3" x2="1057.0" y2="657.3" stroke="#ee3a2a" stroke-width="1.2"/>
<line x1="1053.9" y1="652.8" x2="1060.1" y2="652.8" stroke="#ee3a2a" stroke-width="1.4"/>
<line x1="1065.0" y1="646.7" x2="1065.0" y2="674.7" stroke="#08a008" stroke-width="1.2"/>
<rect x="1061.9" y="650.7" width="6.2" height="13.799999999999955" fill="#08a008"/>
<line x1="1073.0" y1="654.7" x2="1073.0" y2="685.3" stroke="#08a008" stroke-width="1.2"/>
<rect x="1069.9" y="663.5" width="6.2" height="12.5" fill="#08a008"/>
<line x1="1081.0" y1="664.0" x2="1081.0" y2="696.0" stroke="#08a008" stroke-width="1.2"/>
<rect x="1077.9" y="674.7" width="6.2" height="20.0" fill="#08a008"/>
<line x1="1089.0" y1="671.5" x2="1089.0" y2="709.3" stroke="#08a008" stroke-width="1.2"/>
<rect x="1085.9" y="692.8" width="6.2" height="5.900000000000091" fill="#08a008"/>
<line x1="1096.5" y1="686.7" x2="1096.5" y2="708.0" stroke="#ee3a2a" stroke-width="1.2"/>
<line x1="1093.4" y1="698.7" x2="1099.6" y2="698.7" stroke="#ee3a2a" stroke-width="1.4"/>
<line x1="1104.5" y1="681.3" x2="1104.5" y2="709.3" stroke="#ee3a2a" stroke-width="1.2"/>
<rect x="1101.9" y="689.3" width="5.2" height="8.700000000000045" fill="#fff" stroke="#ee3a2a" stroke-width="1.2"/>
<line x1="1112.5" y1="670.7" x2="1112.5" y2="700.0" stroke="#ee3a2a" stroke-width="1.2"/>
<rect x="1109.9" y="683.2" width="5.2" height="5.2999999999999545" fill="#fff" stroke="#ee3a2a" stroke-width="1.2"/>
<line x1="1120.5" y1="637.3" x2="1120.5" y2="683.2" stroke="#ee3a2a" stroke-width="1.2"/>
<rect x="1117.9" y="649.3" width="5.2" height="33.40000000000009" fill="#fff" stroke="#ee3a2a" stroke-width="1.2"/>
<line x1="1128.5" y1="632.0" x2="1128.5" y2="656.5" stroke="#ee3a2a" stroke-width="1.2"/>
<rect x="1125.9" y="645.3" width="5.2" height="5.400000000000091" fill="#fff" stroke="#ee3a2a" stroke-width="1.2"/>
<line x1="1136.0" y1="634.0" x2="1136.0" y2="672.0" stroke="#08a008" stroke-width="1.2"/>
<rect x="1132.9" y="643.2" width="6.2" height="5.2999999999999545" fill="#08a008"/>
<line x1="1144.0" y1="626.7" x2="1144.0" y2="652.0" stroke="#ee3a2a" stroke-width="1.2"/>
<rect x="1141.4" y="639.2" width="5.2" height="7.5" fill="#fff" stroke="#ee3a2a" stroke-width="1.2"/>
<line x1="1152.0" y1="603.2" x2="1152.0" y2="650.7" stroke="#ee3a2a" stroke-width="1.2"/>
<rect x="1149.4" y="604.0" width="5.2" height="35.5" fill="#fff" stroke="#ee3a2a" stroke-width="1.2"/>
<line x1="1160.0" y1="588.0" x2="1160.0" y2="609.3" stroke="#ee3a2a" stroke-width="1.2"/>
<rect x="1157.4" y="588.8" width="5.2" height="16.0" fill="#fff" stroke="#ee3a2a" stroke-width="1.2"/>
<circle cx="536.5" cy="511" r="1.8" fill="#c0341a"/>
<circle cx="544.5" cy="509" r="1.8" fill="#c0341a"/>
<circle cx="552.5" cy="506.7" r="1.8" fill="#c0341a"/>
<circle cx="560" cy="504" r="1.8" fill="#c0341a"/>
<circle cx="702" cy="603" r="1.8" fill="#c0341a"/>
<circle cx="710" cy="601" r="1.8" fill="#c0341a"/>
<circle cx="717.5" cy="600" r="1.8" fill="#c0341a"/>
<circle cx="725.8" cy="599" r="1.8" fill="#c0341a"/>
<circle cx="844" cy="691.5" r="1.8" fill="#c0341a"/>
<circle cx="852.3" cy="689.9" r="1.8" fill="#c0341a"/>
<circle cx="860.3" cy="688" r="1.8" fill="#c0341a"/>
<circle cx="868.3" cy="686.7" r="1.8" fill="#c0341a"/>
<circle cx="876.3" cy="685" r="1.8" fill="#c0341a"/>
<circle cx="884" cy="681.9" r="1.8" fill="#c0341a"/>
<circle cx="891.7" cy="674.7" r="1.8" fill="#c0341a"/>
<circle cx="899.2" cy="664.5" r="1.8" fill="#c0341a"/>
<circle cx="907.5" cy="653.9" r="1.8" fill="#c0341a"/>
<circle cx="915.2" cy="643.5" r="1.8" fill="#c0341a"/>
<circle cx="922.7" cy="628" r="1.8" fill="#c0341a"/>
<circle cx="930.7" cy="613.9" r="1.8" fill="#c0341a"/>
<circle cx="939" cy="598.7" r="1.8" fill="#c0341a"/>
<circle cx="946.4" cy="585.9" r="1.8" fill="#c0341a"/>
<circle cx="954.7" cy="574.7" r="1.8" fill="#c0341a"/>
<circle cx="962" cy="564.8" r="1.8" fill="#c0341a"/>
<circle cx="1120.7" cy="709.9" r="1.8" fill="#c0341a"/>
<circle cx="1128.4" cy="708" r="1.8" fill="#c0341a"/>
<circle cx="1136.4" cy="704.8" r="1.8" fill="#c0341a"/>
<circle cx="1144.4" cy="702.1" r="1.8" fill="#c0341a"/>
<circle cx="1152" cy="697.3" r="1.8" fill="#c0341a"/>
<circle cx="1160" cy="689.9" r="1.8" fill="#c0341a"/>
<circle cx="568" cy="400.5" r="1.8" fill="#0f7a48"/>
<circle cx="576" cy="403" r="1.8" fill="#0f7a48"/>
<circle cx="584" cy="410" r="1.8" fill="#0f7a48"/>
<circle cx="592" cy="417" r="1.8" fill="#0f7a48"/>
<circle cx="599.5" cy="423" r="1.8" fill="#0f7a48"/>
<circle cx="607" cy="428.5" r="1.8" fill="#0f7a48"/>
<circle cx="615" cy="435" r="1.8" fill="#0f7a48"/>
<circle cx="623" cy="444.5" r="1.8" fill="#0f7a48"/>
<circle cx="631" cy="457.6" r="1.8" fill="#0f7a48"/>
<circle cx="638.8" cy="469.6" r="1.8" fill="#0f7a48"/>
<circle cx="647" cy="484" r="1.8" fill="#0f7a48"/>
<circle cx="654.7" cy="497.3" r="1.8" fill="#0f7a48"/>
<circle cx="662.7" cy="509" r="1.8" fill="#0f7a48"/>
<circle cx="670.7" cy="520" r="1.8" fill="#0f7a48"/>
<circle cx="678.7" cy="528" r="1.8" fill="#0f7a48"/>
<circle cx="686.7" cy="535" r="1.8" fill="#0f7a48"/>
<circle cx="694.7" cy="542" r="1.8" fill="#0f7a48"/>
<circle cx="733.5" cy="534.7" r="1.8" fill="#0f7a48"/>
<circle cx="741.5" cy="536.5" r="1.8" fill="#0f7a48"/>
<circle cx="749.5" cy="538" r="1.8" fill="#0f7a48"/>
<circle cx="757.5" cy="540.3" r="1.8" fill="#0f7a48"/>
<circle cx="765.5" cy="541.9" r="1.8" fill="#0f7a48"/>
<circle cx="773.2" cy="545.6" r="1.8" fill="#0f7a48"/>
<circle cx="781.2" cy="552" r="1.8" fill="#0f7a48"/>
<circle cx="789" cy="560.5" r="1.8" fill="#0f7a48"/>
<circle cx="797" cy="568.5" r="1.8" fill="#0f7a48"/>
<circle cx="805" cy="575.5" r="1.8" fill="#0f7a48"/>
<circle cx="812.5" cy="585.3" r="1.8" fill="#0f7a48"/>
<circle cx="820.5" cy="596.8" r="1.8" fill="#0f7a48"/>
<circle cx="828.5" cy="609.3" r="1.8" fill="#0f7a48"/>
<circle cx="836.5" cy="619.5" r="1.8" fill="#0f7a48"/>
<circle cx="978.6" cy="516.7" r="1.8" fill="#0f7a48"/>
<circle cx="986.5" cy="518.1" r="1.8" fill="#0f7a48"/>
<circle cx="994.1" cy="519.5" r="1.8" fill="#0f7a48"/>
<circle cx="1002.1" cy="522.7" r="1.8" fill="#0f7a48"/>
<circle cx="1009.9" cy="528.5" r="1.8" fill="#0f7a48"/>
<circle cx="1017.9" cy="535.5" r="1.8" fill="#0f7a48"/>
<circle cx="1025.9" cy="544" r="1.8" fill="#0f7a48"/>
<circle cx="1033.9" cy="551.5" r="1.8" fill="#0f7a48"/>
<circle cx="1041.6" cy="561.6" r="1.8" fill="#0f7a48"/>
<circle cx="1049.6" cy="573.9" r="1.8" fill="#0f7a48"/>
<circle cx="1057.6" cy="587.2" r="1.8" fill="#0f7a48"/>
<circle cx="1065.6" cy="599.5" r="1.8" fill="#0f7a48"/>
<circle cx="1073.6" cy="614.7" r="1.8" fill="#0f7a48"/>
<circle cx="1081.1" cy="628.5" r="1.8" fill="#0f7a48"/>
<circle cx="1089.2" cy="642.1" r="1.8" fill="#0f7a48"/>
<circle cx="1097.2" cy="655.5" r="1.8" fill="#0f7a48"/>
<circle cx="1105.2" cy="666.1" r="1.8" fill="#0f7a48"/>
<circle cx="1112.9" cy="674.7" r="1.8" fill="#0f7a48"/>
<text x="603" y="504" font-family="Liberation Sans" font-size="12" fill="#6aa86a" text-anchor="middle">平多</text>
<path d="M599,506 V521 M595,516 L599,521 L603,516" stroke="#5aa05a" fill="none" stroke-width="1"/>
<text x="725" y="540" font-family="Liberation Sans" font-size="12" fill="#5aa05a" text-anchor="middle">空</text>
<path d="M719,542 H732 M725,542 V556 M721,551 L725,556 L729,551" stroke="#5aa05a" fill="none" stroke-width="1"/>
<text x="1000" y="550" font-family="Liberation Sans" font-size="12" fill="#5aa05a" text-anchor="middle">空</text>
<path d="M994,552 H1007 M1001,552 V566 M997,561 L1001,566 L1005,561" stroke="#5aa05a" fill="none" stroke-width="1"/>
<text x="925" y="572" font-family="Liberation Sans" font-size="12" fill="#e05050" text-anchor="middle">多</text>
<path d="M922,560 V547 M918,552 L922,547 L926,552" stroke="#e05050" fill="none" stroke-width="1"/>
<line x1="536.1" y1="796.3" x2="536.1" y2="799" stroke="#40c890" stroke-width="1.1"/>
<line x1="543.3" y1="796.3" x2="543.3" y2="804" stroke="#40c890" stroke-width="1.1"/>
<line x1="551.4" y1="796.3" x2="551.4" y2="804.6" stroke="#40c890" stroke-width="1.1"/>
<line x1="559.1" y1="796.3" x2="559.1" y2="812" stroke="#40c890" stroke-width="1.1"/>
<line x1="567.2" y1="796.3" x2="567.2" y2="817.5" stroke="#40c890" stroke-width="1.1"/>
<line x1="575.1" y1="796.3" x2="575.1" y2="825.6" stroke="#40c890" stroke-width="1.1"/>
<line x1="582.9" y1="796.3" x2="582.9" y2="824.9" stroke="#40c890" stroke-width="1.1"/>
<line x1="591.3" y1="796.3" x2="591.3" y2="822.6" stroke="#40c890" stroke-width="1.1"/>
<line x1="598.7" y1="796.3" x2="598.7" y2="821.5" stroke="#40c890" stroke-width="1.1"/>
<line x1="607.0" y1="796.3" x2="607.0" y2="822.6" stroke="#40c890" stroke-width="1.1"/>
<line x1="614.4" y1="796.3" x2="614.4" y2="827.1" stroke="#40c890" stroke-width="1.1"/>
<line x1="622.8" y1="796.3" x2="622.8" y2="826" stroke="#40c890" stroke-width="1.1"/>
<line x1="630.2" y1="796.3" x2="630.2" y2="824.9" stroke="#40c890" stroke-width="1.1"/>
<line x1="638.5" y1="796.3" x2="638.5" y2="817" stroke="#40c890" stroke-width="1.1"/>
<line x1="646.8" y1="796.3" x2="646.8" y2="813" stroke="#40c890" stroke-width="1.1"/>
<line x1="654.3" y1="796.3" x2="654.3" y2="804.6" stroke="#40c890" stroke-width="1.1"/>
<line x1="662.1" y1="796.3" x2="662.1" y2="805.8" stroke="#40c890" stroke-width="1.1"/>
<line x1="669.6" y1="796.3" x2="669.6" y2="802.4" stroke="#40c890" stroke-width="1.1"/>
<line x1="677.9" y1="796.3" x2="677.9" y2="799" stroke="#40c890" stroke-width="1.1"/>
<line x1="685.3" y1="796.3" x2="685.3" y2="801.3" stroke="#40c890" stroke-width="1.1"/>
<line x1="725.1" y1="796.3" x2="725.1" y2="798.6" stroke="#40c890" stroke-width="1.1"/>
<line x1="764.5" y1="796.3" x2="764.5" y2="799" stroke="#40c890" stroke-width="1.1"/>
<line x1="772.9" y1="796.3" x2="772.9" y2="805.3" stroke="#40c890" stroke-width="1.1"/>
<line x1="780.3" y1="796.3" x2="780.3" y2="805.8" stroke="#40c890" stroke-width="1.1"/>
<line x1="788.2" y1="796.3" x2="788.2" y2="804.6" stroke="#40c890" stroke-width="1.1"/>
<line x1="796.0" y1="796.3" x2="796.0" y2="806.2" stroke="#40c890" stroke-width="1.1"/>
<line x1="803.6" y1="796.3" x2="803.6" y2="806.9" stroke="#40c890" stroke-width="1.1"/>
<line x1="812.2" y1="796.3" x2="812.2" y2="806.9" stroke="#40c890" stroke-width="1.1"/>
<line x1="819.7" y1="796.3" x2="819.7" y2="802.4" stroke="#40c890" stroke-width="1.1"/>
<line x1="827.9" y1="796.3" x2="827.9" y2="798.6" stroke="#40c890" stroke-width="1.1"/>
<line x1="993.7" y1="796.3" x2="993.7" y2="797.9" stroke="#40c890" stroke-width="1.1"/>
<line x1="1001.1" y1="796.3" x2="1001.1" y2="803" stroke="#40c890" stroke-width="1.1"/>
<line x1="1009.7" y1="796.3" x2="1009.7" y2="806.2" stroke="#40c890" stroke-width="1.1"/>
<line x1="1017.6" y1="796.3" x2="1017.6" y2="806.2" stroke="#40c890" stroke-width="1.1"/>
<line x1="1025.2" y1="796.3" x2="1025.2" y2="806.9" stroke="#40c890" stroke-width="1.1"/>
<line x1="1033.3" y1="796.3" x2="1033.3" y2="810.3" stroke="#40c890" stroke-width="1.1"/>
<line x1="1041.2" y1="796.3" x2="1041.2" y2="812.5" stroke="#40c890" stroke-width="1.1"/>
<line x1="1049.1" y1="796.3" x2="1049.1" y2="813.6" stroke="#40c890" stroke-width="1.1"/>
<line x1="1056.9" y1="796.3" x2="1056.9" y2="813.6" stroke="#40c890" stroke-width="1.1"/>
<line x1="1064.8" y1="796.3" x2="1064.8" y2="813.6" stroke="#40c890" stroke-width="1.1"/>
<line x1="1073.1" y1="796.3" x2="1073.1" y2="814.8" stroke="#40c890" stroke-width="1.1"/>
<line x1="1080.6" y1="796.3" x2="1080.6" y2="815.2" stroke="#40c890" stroke-width="1.1"/>
<line x1="1088.9" y1="796.3" x2="1088.9" y2="815.9" stroke="#40c890" stroke-width="1.1"/>
<line x1="1096.8" y1="796.3" x2="1096.8" y2="814.8" stroke="#40c890" stroke-width="1.1"/>
<line x1="1104.6" y1="796.3" x2="1104.6" y2="811.4" stroke="#40c890" stroke-width="1.1"/>
<line x1="1112.5" y1="796.3" x2="1112.5" y2="807.6" stroke="#40c890" stroke-width="1.1"/>
<line x1="1120.0" y1="796.3" x2="1120.0" y2="800.1" stroke="#40c890" stroke-width="1.1"/>
<line x1="708.0" y1="796.3" x2="708.0" y2="795" stroke="#d04828" stroke-width="1.1"/>
<line x1="744.0" y1="796.3" x2="744.0" y2="795" stroke="#d04828" stroke-width="1.1"/>
<line x1="749.0" y1="796.3" x2="749.0" y2="794" stroke="#d04828" stroke-width="1.1"/>
<line x1="859.4" y1="796.3" x2="859.4" y2="791.8" stroke="#d04828" stroke-width="1.1"/>
<line x1="867.7" y1="796.3" x2="867.7" y2="789.3" stroke="#d04828" stroke-width="1.1"/>
<line x1="875.1" y1="796.3" x2="875.1" y2="786.2" stroke="#d04828" stroke-width="1.1"/>
<line x1="883.5" y1="796.3" x2="883.5" y2="778.8" stroke="#d04828" stroke-width="1.1"/>
<line x1="890.9" y1="796.3" x2="890.9" y2="773.8" stroke="#d04828" stroke-width="1.1"/>
<line x1="898.8" y1="796.3" x2="898.8" y2="772.5" stroke="#d04828" stroke-width="1.1"/>
<line x1="907.3" y1="796.3" x2="907.3" y2="773.1" stroke="#d04828" stroke-width="1.1"/>
<line x1="914.5" y1="796.3" x2="914.5" y2="769.1" stroke="#d04828" stroke-width="1.1"/>
<line x1="922.8" y1="796.3" x2="922.8" y2="768" stroke="#d04828" stroke-width="1.1"/>
<line x1="930.3" y1="796.3" x2="930.3" y2="770.9" stroke="#d04828" stroke-width="1.1"/>
<line x1="938.6" y1="796.3" x2="938.6" y2="775.4" stroke="#d04828" stroke-width="1.1"/>
<line x1="946.0" y1="796.3" x2="946.0" y2="780.6" stroke="#d04828" stroke-width="1.1"/>
<line x1="954.3" y1="796.3" x2="954.3" y2="783.3" stroke="#d04828" stroke-width="1.1"/>
<line x1="962.4" y1="796.3" x2="962.4" y2="783.7" stroke="#d04828" stroke-width="1.1"/>
<line x1="970.1" y1="796.3" x2="970.1" y2="791.1" stroke="#d04828" stroke-width="1.1"/>
<line x1="978.2" y1="796.3" x2="978.2" y2="792.3" stroke="#d04828" stroke-width="1.1"/>
<line x1="985.4" y1="796.3" x2="985.4" y2="791.8" stroke="#d04828" stroke-width="1.1"/>
<line x1="1135.5" y1="796.3" x2="1135.5" y2="791.8" stroke="#d04828" stroke-width="1.1"/>
<line x1="1144.0" y1="796.3" x2="1144.0" y2="787.8" stroke="#d04828" stroke-width="1.1"/>
<line x1="1151.2" y1="796.3" x2="1151.2" y2="782.1" stroke="#d04828" stroke-width="1.1"/>
<line x1="1159.3" y1="796.3" x2="1159.3" y2="776.5" stroke="#d04828" stroke-width="1.1"/>
<path d="M536.1,768.6 C537.4,769.2 541.4,771.0 544.0,772.0 C546.6,773.0 548.1,772.0 551.9,774.3 C555.6,776.5 562.4,782.2 566.5,785.5 C570.6,788.8 573.6,792.1 576.6,794.1 C579.6,796.1 580.9,795.8 584.5,797.2 C588.1,798.6 594.2,800.8 598.0,802.4 C601.8,804.0 604.0,805.0 607.0,806.9 C610.0,808.8 612.1,811.7 616.0,813.6 C619.9,815.5 625.7,817.5 630.6,818.1 C635.5,818.7 641.3,817.8 645.3,817.0 C649.2,816.2 651.7,813.9 654.3,813.6 C656.9,813.3 657.2,815.3 661.0,815.2 C664.8,815.1 672.7,813.0 676.8,813.0 C680.9,813.0 683.2,815.4 685.8,815.4 C688.4,815.4 688.8,813.6 692.5,813.0 C696.2,812.4 703.0,811.7 708.3,811.8 C713.5,811.9 717.2,813.8 724.0,813.6 C730.8,813.4 742.0,810.9 748.8,810.7 C755.5,810.5 760.4,811.4 764.5,812.5 C768.6,813.6 769.4,816.1 773.5,817.5 C777.6,818.9 782.9,819.9 789.3,821.0 C795.7,822.1 805.4,824.1 811.8,824.2 C818.2,824.3 820.9,822.3 827.5,821.5 C834.1,820.7 843.4,820.8 851.5,819.3 C859.6,817.8 869.9,815.2 876.3,812.5 C882.7,809.8 884.9,805.8 889.8,803.1 C894.7,800.4 899.9,799.1 905.5,796.3 C911.1,793.4 919.0,788.0 923.5,786.0 C928.0,784.0 928.8,784.7 932.5,784.4 C936.2,784.1 941.1,784.7 946.0,784.4 C950.9,784.1 957.7,782.6 961.8,782.8 C965.9,783.0 966.7,785.0 970.8,785.5 C974.9,786.0 981.6,784.8 986.5,785.5 C991.4,786.2 995.9,788.5 1000.0,790.0 C1004.1,791.5 1005.7,792.8 1011.3,794.5 C1016.9,796.2 1026.3,797.5 1033.8,800.1 C1041.3,802.7 1048.8,807.5 1056.3,810.3 C1063.8,813.1 1072.0,815.0 1078.8,817.0 C1085.5,819.0 1091.2,821.8 1096.8,822.6 C1102.4,823.4 1107.6,822.9 1112.5,822.0 C1117.4,821.1 1121.1,818.6 1126.0,817.0 C1130.9,815.4 1136.2,814.6 1141.8,812.1 C1147.4,809.6 1156.8,803.4 1159.8,801.7" fill="none" stroke="#28c0f0" stroke-width="1.7"/>
<path d="M536.1,767.5 C538.5,767.9 545.7,768.7 550.8,769.8 C555.9,770.9 560.9,772.0 566.5,774.3 C572.1,776.5 577.0,780.0 584.5,783.3 C592.0,786.6 604.0,790.9 611.5,794.1 C619.0,797.3 623.5,799.9 629.5,802.4 C635.5,804.9 640.8,807.5 647.5,809.1 C654.2,810.7 662.5,811.5 670.0,812.1 C677.5,812.7 685.0,812.5 692.5,812.5 C700.0,812.5 707.5,812.2 715.0,812.1 C722.5,812.0 730.0,811.8 737.5,811.8 C745.0,811.8 752.5,811.6 760.0,812.1 C767.5,812.6 775.0,813.6 782.5,814.8 C790.0,816.0 798.2,818.3 805.0,819.3 C811.8,820.3 815.2,820.8 823.0,821.0 C830.8,821.2 842.6,821.1 851.5,820.4 C860.4,819.7 867.3,819.4 876.3,817.0 C885.3,814.6 896.1,809.2 905.5,805.8 C914.9,802.3 924.2,798.9 932.5,796.3 C940.8,793.7 947.5,791.5 955.0,790.0 C962.5,788.5 971.5,787.9 977.5,787.3 C983.5,786.7 984.6,786.0 991.0,786.6 C997.4,787.2 1007.9,789.9 1015.8,791.1 C1023.7,792.4 1029.7,791.9 1038.3,794.1 C1046.9,796.4 1058.9,801.7 1067.5,804.6 C1076.1,807.5 1082.5,809.4 1090.0,811.4 C1097.5,813.4 1105.0,815.7 1112.5,816.6 C1120.0,817.5 1127.1,817.5 1135.0,816.6 C1142.9,815.7 1155.7,812.3 1159.8,811.4" fill="none" stroke="#d030d0" stroke-width="1.7"/>
<path d="M584.8,879.0 L587.4,879.7 L590.0,878.9 L592.5,877.2 L595.1,877.0 L597.6,876.8 L600.1,877.1 L602.7,877.3 L605.2,875.9 L607.7,875.6 L610.2,877.2 L612.8,876.3 L615.3,876.9 L617.8,875.3 L620.3,876.1 L622.8,876.5 L625.4,875.5 L627.9,876.8 L630.4,876.6 L632.9,874.8 L635.5,874.7 L638.0,875.7 L640.5,876.4 L643.3,874.9 L646.0,874.2 L648.8,874.3 L651.5,873.2 L654.3,873.2 L657.0,873.3 L659.8,873.1 L662.5,872.2 L665.3,871.9 L668.4,872.6 L671.5,873.9 L674.5,874.3 L677.6,874.5 L680.1,875.6 L682.7,874.5 L685.2,874.1 L687.8,872.7 L690.3,873.7 L692.8,872.9 L695.4,870.9 L697.9,870.7 L700.4,871.0 L703.0,870.4 L705.5,870.3 L708.1,868.7 L710.6,869.0 L713.2,868.3 L715.9,867.2 L718.5,867.4 L721.1,867.6 L723.7,867.1 L726.4,866.1 L729.0,865.9 L731.6,864.4 L734.2,864.4 L736.9,865.2 L739.5,864.0 L742.0,862.5 L744.5,862.2 L747.1,861.5 L749.6,860.4 L752.1,858.8 L754.6,857.9 L757.2,857.0 L759.7,856.5 L762.2,854.9 L764.8,855.5 L767.4,856.4 L769.9,856.3 L772.5,857.1 L775.2,858.3 L777.9,858.8 L780.5,857.9 L783.2,857.4 L785.9,856.8 L788.6,857.4 L791.3,858.3 L793.9,857.7 L796.6,857.2 L799.3,857.7 L802.1,857.5 L804.8,859.1 L807.6,861.0 L810.3,861.3 L813.1,862.1 L815.8,862.7 L818.6,864.3 L821.3,866.2 L824.1,865.3 L826.7,866.8 L829.2,866.8 L831.8,866.8 L834.4,866.4 L837.0,866.5 L839.5,865.8 L842.1,865.8 L844.7,865.4 L847.3,864.6 L849.9,866.1 L852.4,865.4 L855.0,864.6 L857.5,865.5 L860.1,865.7 L862.6,865.8 L865.2,866.0 L867.7,866.7 L870.3,867.1 L872.8,867.4 L875.4,867.4 L877.9,866.8 L880.5,867.5 L883.0,867.7 L885.7,868.6 L888.3,869.3 L891.0,869.3 L893.6,869.5 L896.3,869.6 L898.9,868.7 L901.6,870.0 L904.2,869.0 L906.9,867.1 L909.5,866.3 L912.2,865.6 L914.8,866.5 L917.5,864.8 L920.1,863.8 L922.7,865.3 L925.3,865.2 L927.9,865.1 L930.5,865.8 L933.0,867.0 L935.6,866.7 L938.2,867.4 L940.8,868.7 L943.3,868.0 L945.9,867.5 L948.4,867.5 L951.0,866.4 L953.5,866.9 L956.0,866.7 L958.6,866.0 L961.1,865.6 L963.6,867.0 L966.2,865.9 L968.7,865.1 L971.3,865.6 L973.8,865.8 L976.4,864.5 L978.9,864.8 L981.5,865.3 L984.1,866.7 L986.7,865.8 L989.2,867.2 L991.8,867.4 L994.4,867.4 L997.1,866.2 L999.9,867.1 L1002.6,866.2 L1005.4,865.0 L1008.1,863.9 L1010.9,864.1 L1013.6,863.0 L1016.4,862.8 L1019.1,861.7 L1021.9,862.0 L1024.6,860.5 L1027.4,860.7 L1030.1,861.7 L1032.9,861.1 L1035.6,859.6 L1038.4,860.4 L1041.1,859.0 L1043.9,859.9 L1047.0,857.9 L1050.1,855.7 L1053.2,853.9 L1056.3,851.8 L1058.9,853.9 L1061.5,852.7 L1064.0,854.6 L1066.6,855.3 L1069.2,854.9 L1071.8,854.5 L1074.3,856.2 L1076.9,856.8 L1079.5,856.1 L1082.1,855.6 L1084.6,855.2 L1087.2,854.9 L1089.8,854.5 L1092.3,855.2 L1094.9,854.6 L1097.5,854.0 L1100.1,853.6 L1102.7,854.6 L1105.2,853.7 L1107.8,853.9 L1110.4,854.1 L1113.0,855.7 L1115.6,856.2 L1118.2,855.0 L1120.7,855.9 L1123.3,856.6 L1125.9,858.5 L1128.5,858.6 L1131.4,856.4 L1134.3,854.9 L1137.1,854.6 L1140.0,853.7 L1142.9,851.8" fill="none" stroke="#afada9" stroke-width="1.8"/>
</svg>
<div class="r" style="left:474px;top:156px;width:698px;height:2px;background:#3b7bd0;"></div>
<div class="t" style="top:173.5px;font-size:16px;line-height:22px;color:#444;left:474.0px;"><b style="color:#444">现货黄金</b> <span style="color:#555">XAU</span></div>
<div class="r" style="left:586px;top:173px;width:54px;height:22px;background:#d1cfcb;"></div>
<div class="t" style="top:173.5px;font-size:15px;line-height:21px;color:#4a8fd8;left:313.0px;width:600px;text-align:center;">交易中</div>
<svg style="position:absolute;left:0;top:0" width="1600" height="900">
<path d="M985,178.4 H998.7 V181 H985 Z M985,181 L990.5,175.6 V181 Z M985,183.4 H998.7 V186 H985 Z M998.7,183.4 L993.2,188.8 V183.4 Z" fill="#3a78d0"/>
<g fill="none" stroke="#3a78d0" stroke-width="2.6">
<path d="M1093.5,182 A6.2,6.2 0 0 1 1105,181.5"/><path d="M1105.5,187 A6.2,6.2 0 0 1 1094,187.5"/>
</g>
<path d="M1090.5,184.5 L1093.5,179.5 L1096.5,184.5 Z M1102.5,184.5 L1105.5,189.5 L1108.5,184.5 Z" fill="#3a78d0"/>
</svg>
<div class="t" style="top:174.0px;font-size:15px;line-height:21px;color:#3a78c8;left:1004.0px;">美元/盎司</div>
<div class="t" style="top:174.0px;font-size:15px;line-height:21px;color:#3a78c8;left:1113.0px;">刷新行情</div>
<div class="t" style="top:198.5px;font-size:35.5px;line-height:49px;color:#c8363a;font-weight:bold;left:474.5px;letter-spacing:-0.5px">1948.19</div>
<div class="t" style="top:208.5px;font-size:21px;line-height:29px;color:#c84848;left:620.5px;letter-spacing:-0.8px">11.11(0.57%)</div>
<div class="t" style="top:216.5px;font-size:13px;line-height:18px;color:#999;right:428.0px;">2023-08-30 22:17:19</div>
<div class="r" style="left:474px;top:254px;width:698px;height:1px;background:#cfccc8;"></div>
<div class="t" style="top:269.5px;font-size:13px;line-height:18px;color:#444;left:474.0px;"><span style="color:#444">买价:</span></div>
<div class="t" style="top:269.5px;font-size:13px;line-height:18px;color:#c84848;left:512.5px;">1948.19</div>
<div class="t" style="top:269.5px;font-size:13px;line-height:18px;color:#444;left:590.0px;"><span style="color:#444">卖价:</span></div>
<div class="t" style="top:269.5px;font-size:13px;line-height:18px;color:#c84848;left:628.5px;">1948.50</div>
<div class="t" style="top:269.5px;font-size:13px;line-height:18px;color:#444;left:706.0px;"><span style="color:#444">今开:</span></div>
<div class="t" style="top:269.5px;font-size:13px;line-height:18px;color:#4a8a4a;left:744.5px;">1936.98</div>
<div class="t" style="top:269.5px;font-size:13px;line-height:18px;color:#444;left:822.0px;"><span style="color:#444">昨收:</span></div>
<div class="t" style="top:269.5px;font-size:13px;line-height:18px;color:#444;left:860.5px;">1937.09</div>
<div class="t" style="top:269.5px;font-size:13px;line-height:18px;color:#444;left:937.5px;"><span style="color:#444">最高:</span></div>
<div class="t" style="top:269.5px;font-size:13px;line-height:18px;color:#c84848;left:976.0px;">1948.49</div>
<div class="t" style="top:269.5px;font-size:13px;line-height:18px;color:#444;left:1054.0px;"><span style="color:#444">最低:</span></div>
<div class="t" style="top:269.5px;font-size:13px;line-height:18px;color:#4a8a4a;left:1092.5px;">1934.69</div>
<div class="r" style="left:474px;top:312px;width:698px;height:33px;background:#d3d1cd;"></div>
<div class="r" style="left:592px;top:314px;width:49px;height:31px;background:#dddcd8;"></div>
<div class="r" style="left:592px;top:312px;width:49px;height:2px;background:#2f4f78;"></div>
<div class="t" style="top:321.0px;font-size:14px;line-height:19px;color:#555;left:215.0px;width:600px;text-align:center;">分时</div>
<div class="t" style="top:321.0px;font-size:14px;line-height:19px;color:#555;left:265.5px;width:600px;text-align:center;">5日</div>
<div class="t" style="top:321.0px;font-size:14px;line-height:19px;color:#555;left:316.5px;width:600px;text-align:center;">日K</div>
<div class="t" style="top:321.0px;font-size:14px;line-height:19px;color:#555;left:367.0px;width:600px;text-align:center;">周K</div>
<div class="t" style="top:321.0px;font-size:14px;line-height:19px;color:#555;left:417.0px;width:600px;text-align:center;">月K</div>
<div class="t" style="top:321.0px;font-size:14px;line-height:19px;color:#555;left:468.0px;width:600px;text-align:center;">5分</div>
<div class="t" style="top:321.0px;font-size:14px;line-height:19px;color:#555;left:518.5px;width:600px;text-align:center;">15分</div>
<div class="t" style="top:321.0px;font-size:14px;line-height:19px;color:#555;left:569.5px;width:600px;text-align:center;">30分</div>
<div class="t" style="top:321.0px;font-size:14px;line-height:19px;color:#555;left:620.0px;width:600px;text-align:center;">60分</div>
<div class="t" style="top:318.0px;font-size:17px;line-height:23px;color:#c0393b;font-weight:bold;left:955.5px;">打开金投网APP</div>
<div class="t" style="top:316.5px;font-size:18px;line-height:25px;color:#3a78c8;left:795.0px;width:600px;text-align:center;">策</div>
<svg style="position:absolute;left:0;top:0" width="1600" height="900">
<circle cx="1105" cy="320.5" r="3" fill="#ee1111"/>
<g fill="none" stroke="#3a78d0" stroke-width="2.2">
<path d="M1119,325 V320 H1124 M1130,320 H1135 V325 M1135,330 V335 H1130 M1124,335 H1119 V330"/>
</g>
<g fill="#3a78d0"><circle cx="1156" cy="321" r="1.7"/><circle cx="1156" cy="328" r="1.7"/><circle cx="1156" cy="335" r="1.7"/></g>
</svg>
<div class="t" style="top:350.5px;font-size:13px;line-height:18px;color:#333;left:479.8px;">2023/08/30</div>
<div class="t" style="top:350.5px;font-size:13px;line-height:18px;color:#333;left:556.3px;">开 1936.98</div>
<div class="t" style="top:350.5px;font-size:13px;line-height:18px;color:#333;left:628.6px;">高 1945.79</div>
<div class="t" style="top:350.5px;font-size:13px;line-height:18px;color:#333;left:700.2px;">收 1945.69</div>
<div class="t" style="top:350.5px;font-size:13px;line-height:18px;color:#333;left:771.6px;">低 1934.69</div>
<div class="t" style="top:350.5px;font-size:13px;line-height:18px;color:#333;left:843.0px;">幅 0.44%</div>
<div class="t" style="top:368.0px;font-size:12px;line-height:16px;color:#808080;left:532.0px;">SAR: 1893.64</div>
<div class="t" style="top:368.0px;font-size:12px;line-height:16px;color:#808080;left:627.0px;">SAR操作收益: <span style="color:#d04848">2.07%</span></div>
<div class="t" style="top:368.0px;font-size:12px;line-height:16px;color:#808080;left:754.5px;">区间股价收益: <span style="color:#4a8a4a">-3.44%</span></div>
<div class="t" style="top:368.0px;font-size:12px;line-height:16px;color:#f08aa8;left:885.0px;">MA5: 1926.67</div>
<div class="t" style="top:368.0px;font-size:12px;line-height:16px;color:#3aa0c0;left:980.0px;">MA10: 1911.77</div>
<div class="t" style="top:368.0px;font-size:12px;line-height:16px;color:#d04878;left:1075.0px;">MA20: 1914.67</div>
<div class="t" style="top:381.0px;font-size:13px;line-height:18px;color:#555;right:1068.0px;">2050</div>
<div class="t" style="top:433.0px;font-size:13px;line-height:18px;color:#555;right:1068.0px;">2020</div>
<div class="t" style="top:491.5px;font-size:13px;line-height:18px;color:#555;right:1068.0px;">1990</div>
<div class="t" style="top:550.5px;font-size:13px;line-height:18px;color:#555;right:1068.0px;">1960</div>
<div class="t" style="top:609.0px;font-size:13px;line-height:18px;color:#555;right:1068.0px;">1930</div>
<div class="t" style="top:668.0px;font-size:13px;line-height:18px;color:#555;right:1068.0px;">1900</div>
<div class="t" style="top:720.5px;font-size:13px;line-height:18px;color:#555;right:1068.0px;">1870</div>
<div class="t" style="top:381.0px;font-size:12px;line-height:16px;color:#98aa50;left:532.0px;">MA30: 1928.76</div>
<div class="t" style="top:385.0px;font-size:13px;line-height:18px;color:#222;left:539.5px;">2041.09</div>
<div class="t" style="top:708.5px;font-size:13px;line-height:18px;color:#222;left:1046.0px;">1883.70</div>
<div class="t" style="top:736.0px;font-size:13px;line-height:18px;color:#222;font-weight:bold;left:531.0px;">2023/5/11</div>
<div class="t" style="top:736.0px;font-size:13px;line-height:18px;color:#222;font-weight:bold;left:635.0px;">2023/6</div>
<div class="t" style="top:736.0px;font-size:13px;line-height:18px;color:#222;font-weight:bold;left:808.0px;">2023/7</div>
<div class="t" style="top:736.0px;font-size:13px;line-height:18px;color:#222;font-weight:bold;left:975.0px;">2023/8</div>
<div class="t" style="top:736.0px;font-size:13px;line-height:18px;color:#222;font-weight:bold;left:1106.5px;">2023/8/30</div>
<div class="t" style="top:748.0px;font-size:12.5px;line-height:17px;color:#7a8a98;left:496.5px;">MACD</div>
<div class="t" style="top:748.0px;font-size:12.5px;line-height:17px;color:#3aa8c8;left:541.0px;">DIF: -2.90</div>
<div class="t" style="top:748.0px;font-size:12.5px;line-height:17px;color:#c848c8;left:636.0px;">DEA: -8.36</div>
<div class="t" style="top:748.0px;font-size:12.5px;line-height:17px;color:#a04848;left:731.0px;">MACD: 10.93</div>
<div class="t" style="top:762.0px;font-size:13px;line-height:18px;color:#555;right:1069.0px;">18</div>
<div class="t" style="top:811.0px;font-size:13px;line-height:18px;color:#555;right:1069.0px;">-18</div>
<svg style="position:absolute;left:0;top:0" width="1600" height="900">
<path d="M1130,761 L1135,754 L1140,761 Z M1152,754 L1157,761 L1162,754 Z" fill="#cfcdc9"/>
</svg>
<div class="r" style="left:532px;top:828px;width:21px;height:21px;background:#dad8d4;border-right:1px solid #cfcdc9;box-sizing:border-box"></div>
<div class="r" style="left:557px;top:828px;width:21px;height:21px;background:#dad8d4;border-right:1px solid #cfcdc9;box-sizing:border-box"></div>
<svg style="position:absolute;left:0;top:0" width="1600" height="900">
<path d="M537.5,844 L543,835 L548.5,844 Z M562,835 L567.5,844 L573,835 Z" fill="#111"/>
</svg>
<div class="r" style="left:588px;top:828px;width:64px;height:22px;background:#d2cfcb;border-right:1px solid #c6c3bf;box-sizing:border-box"></div>
<div class="t" style="top:830.0px;font-size:13.5px;line-height:18px;color:#8a8a8a;left:320.7px;width:600px;text-align:center;">无</div>
<div class="r" style="left:653px;top:828px;width:64px;height:22px;background:#4e5357;"></div>
<div class="t" style="top:830.0px;font-size:13.5px;line-height:18px;color:#fff;left:384.8px;width:600px;text-align:center;">MACD</div>
<div class="r" style="left:717px;top:828px;width:65px;height:22px;background:#d2cfcb;border-right:1px solid #c6c3bf;box-sizing:border-box"></div>
<div class="t" style="top:830.0px;font-size:13.5px;line-height:18px;color:#8a8a8a;left:449.1px;width:600px;text-align:center;">KDJ</div>
<div class="r" style="left:781px;top:828px;width:64px;height:22px;background:#d2cfcb;border-right:1px solid #c6c3bf;box-sizing:border-box"></div>
<div class="t" style="top:830.0px;font-size:13.5px;line-height:18px;color:#8a8a8a;left:513.6px;width:600px;text-align:center;">RSI</div>
<div class="r" style="left:846px;top:828px;width:64px;height:22px;background:#d2cfcb;border-right:1px solid #c6c3bf;box-sizing:border-box"></div>
<div class="t" style="top:830.0px;font-size:13.5px;line-height:18px;color:#8a8a8a;left:577.6px;width:600px;text-align:center;">BOLL</div>
<div class="r" style="left:909px;top:828px;width:64px;height:22px;background:#d2cfcb;border-right:1px solid #c6c3bf;box-sizing:border-box"></div>
<div class="t" style="top:830.0px;font-size:13.5px;line-height:18px;color:#8a8a8a;left:641.4px;width:600px;text-align:center;">WR</div>
<div class="r" style="left:973px;top:828px;width:64px;height:22px;background:#d2cfcb;border-right:1px solid #c6c3bf;box-sizing:border-box"></div>
<div class="t" style="top:830.0px;font-size:13.5px;line-height:18px;color:#8a8a8a;left:705.5px;width:600px;text-align:center;">DMI</div>
<div class="r" style="left:532px;top:850px;width:611px;height:2px;background:#4a4e52;"></div>
<div class="r" style="left:532px;top:852px;width:631px;height:28px;border:1px solid #cfcdc9;border-top:none;box-sizing:border-box"></div>
<div class="r" style="left:1145px;top:850px;width:17px;height:30px;border:1px solid #9a9894;box-sizing:border-box;background:#d6d4d0"></div>
<div class="r" style="left:1153px;top:851px;width:3px;height:28px;background:#6a6864;"></div>
<div class="t" style="top:861.5px;font-size:13.5px;line-height:18px;color:#3c3c3c;left:634.5px;-webkit-text-stroke:0.35px #3c3c3c">2008</div>
<div class="t" style="top:861.5px;font-size:13.5px;line-height:18px;color:#3c3c3c;left:731.5px;-webkit-text-stroke:0.35px #3c3c3c">2011</div>
<div class="t" style="top:861.5px;font-size:13.5px;line-height:18px;color:#3c3c3c;left:855.5px;-webkit-text-stroke:0.35px #3c3c3c">2015</div>
<div class="t" style="top:861.5px;font-size:13.5px;line-height:18px;color:#3c3c3c;left:955.5px;-webkit-text-stroke:0.35px #3c3c3c">2018</div>
<div class="t" style="top:861.5px;font-size:13.5px;line-height:18px;color:#3c3c3c;left:1052.0px;-webkit-text-stroke:0.35px #3c3c3c">2021</div>
<div class="r" style="left:1188px;top:156px;width:259px;height:39px;border:1px solid #d2d0cc;border-top:2px solid #3b7bd0"></div>
<div class="t" style="top:166.0px;font-size:16px;line-height:22px;color:#4a6890;left:1198.5px;">期货开户</div>
<div class="r" style="left:1414px;top:165px;width:33px;height:18px;background:#f1f0ee;"></div>
<div class="t" style="top:166.5px;font-size:11px;line-height:15px;color:#999;left:1130.5px;width:600px;text-align:center;">广告</div>
<div class="r" style="left:1188px;top:218px;width:259px;height:309px;border:1px solid #d2d0cc;border-top:2px solid #3b7bd0;border-bottom:none"></div>
<div class="t" style="top:229.0px;font-size:16px;line-height:22px;color:#4a6890;left:1198.5px;">财经日历</div>
<div class="r" style="left:1189px;top:259px;width:258px;height:1px;background:#cfcdc9;"></div>
<div class="r" style="left:1189px;top:386px;width:258px;height:1px;background:#cfcdc9;"></div>
<svg style="position:absolute;left:0;top:0" width="1600" height="900">
<circle cx="1215" cy="289" r="14.5" fill="#f8c8a8"/><circle cx="1215" cy="289" r="12.5" fill="#ff7a2e"/>
<circle cx="1215" cy="410.5" r="14.5" fill="#f8c8a8"/><circle cx="1215" cy="410.5" r="12.5" fill="#ff7a2e"/>
</svg>
<div class="t" style="top:280.0px;font-size:13px;line-height:18px;color:#fff;left:915.0px;width:600px;text-align:center;">30</div>
<div class="t" style="top:401.5px;font-size:13px;line-height:18px;color:#fff;left:915.0px;width:600px;text-align:center;">30</div>
<div class="t" style="top:280.5px;font-size:12.5px;line-height:17px;color:#333;left:1242.5px;">美国7月批发库存月率</div>
<div class="t" style="top:402.0px;font-size:12.5px;line-height:17px;color:#333;left:1242.5px;">美国7月成屋签约销售指数月率</div>
<div class="t" style="top:313.5px;font-size:13.5px;line-height:18px;color:#333;left:1199.5px;">20:30</div>
<div class="t" style="top:313.5px;font-size:13px;line-height:18px;color:#333;left:1261.5px;">美国</div>
<div class="r" style="left:1324px;top:312px;width:84px;height:23px;background:#ff0000;"></div>
<div class="t" style="top:314.5px;font-size:13px;line-height:18px;color:#fff;left:1066.0px;width:600px;text-align:center;">利多金银 原油</div>
<div class="t" style="top:435.0px;font-size:13.5px;line-height:18px;color:#333;left:1199.5px;">22:00</div>
<div class="t" style="top:435.0px;font-size:13px;line-height:18px;color:#333;left:1261.5px;">美国</div>
<div class="t" style="top:339.5px;font-size:12.5px;line-height:17px;color:#333;left:1217.0px;">前值:</div>
<div class="t" style="top:339.5px;font-size:12.5px;line-height:17px;color:#333;left:1284.5px;">公布值:</div>
<div class="t" style="top:339.5px;font-size:12.5px;line-height:17px;color:#333;left:1358.0px;">预测值:</div>
<div class="t" style="top:355.5px;font-size:13px;line-height:18px;color:#5a7a5a;left:936.0px;width:600px;text-align:center;">-0.50</div>
<div class="t" style="top:355.5px;font-size:13px;line-height:18px;color:#5a7a5a;left:1009.5px;width:600px;text-align:center;">-0.1</div>
<div class="t" style="top:355.5px;font-size:13px;line-height:18px;color:#5a7a5a;left:1084.0px;width:600px;text-align:center;">-0.30</div>
<div class="t" style="top:461.0px;font-size:12.5px;line-height:17px;color:#333;left:1217.0px;">前值:</div>
<div class="t" style="top:461.0px;font-size:12.5px;line-height:17px;color:#333;left:1284.5px;">公布值:</div>
<div class="t" style="top:461.0px;font-size:12.5px;line-height:17px;color:#333;left:1358.0px;">预测值:</div>
<div class="t" style="top:477.5px;font-size:13px;line-height:18px;color:#5a7a5a;left:936.0px;width:600px;text-align:center;">0.30</div>
<div class="t" style="top:477.5px;font-size:13px;line-height:18px;color:#5a7a5a;left:1009.5px;width:600px;text-align:center;">待公布</div>
<div class="t" style="top:477.5px;font-size:13px;line-height:18px;color:#5a7a5a;left:1084.0px;width:600px;text-align:center;">-0.6</div>
<div class="r" style="left:1189px;top:517px;width:66px;height:1px;background:#e8e6e2;"></div>
<div class="r" style="left:1383px;top:517px;width:64px;height:1px;background:#e8e6e2;"></div>
<div class="t" style="top:508.5px;font-size:13px;line-height:18px;color:#383c44;font-weight:bold;left:1019.0px;width:600px;text-align:center;">00:00:00</div>
<div class="r" style="left:1463px;top:391px;width:50px;height:179px;border-radius:7px;background:linear-gradient(160deg,#1670f2 0%,#0a6af6 60%,#1a78f8 100%);overflow:hidden"><div style="position:absolute;left:-12px;top:16px;width:24px;height:24px;border-radius:50%;background:rgba(255,255,255,0.18)"></div><div style="position:absolute;left:30px;top:20px;width:40px;height:40px;transform:rotate(30deg);background:rgba(80,60,240,0.35)"></div><div style="position:absolute;left:0;top:158px;width:50px;height:21px;background:#3a8af6"></div></div>
<div class="r" style="left:1463px;top:578px;width:50px;height:179px;border-radius:7px;background:linear-gradient(180deg,#ff8a2a 0%,#ff5a38 50%,#ff2040 100%);overflow:hidden"><div style="position:absolute;left:10px;top:8px;width:60px;height:60px;transform:rotate(45deg);background:rgba(255,255,255,0.07)"></div><div style="position:absolute;left:-20px;top:120px;width:50px;height:50px;transform:rotate(45deg);background:rgba(255,255,255,0.10)"></div></div>
<div class="t" style="top:405.5px;font-size:20px;line-height:28px;color:#fff;font-weight:bold;left:1189.5px;width:600px;text-align:center;text-shadow:0 1px 1px rgba(0,0,80,0.3)">下</div>
<div class="t" style="top:430.2px;font-size:20px;line-height:28px;color:#fff;font-weight:bold;left:1189.5px;width:600px;text-align:center;text-shadow:0 1px 1px rgba(0,0,80,0.3)">载</div>
<div class="t" style="top:454.9px;font-size:20px;line-height:28px;color:#fff;font-weight:bold;left:1189.5px;width:600px;text-align:center;text-shadow:0 1px 1px rgba(0,0,80,0.3)">金</div>
<div class="t" style="top:479.6px;font-size:20px;line-height:28px;color:#fff;font-weight:bold;left:1189.5px;width:600px;text-align:center;text-shadow:0 1px 1px rgba(0,0,80,0.3)">投</div>
<div class="t" style="top:504.3px;font-size:20px;line-height:28px;color:#fff;font-weight:bold;left:1189.5px;width:600px;text-align:center;text-shadow:0 1px 1px rgba(0,0,80,0.3)">网</div>
<div class="t" style="top:529.0px;font-size:18px;line-height:25px;color:#fff;font-weight:bold;left:1189.0px;width:600px;text-align:center;">APP</div>
<div class="t" style="top:592.5px;font-size:20px;line-height:28px;color:#fff;font-weight:bold;left:1188.0px;width:600px;text-align:center;text-shadow:0 1px 1px rgba(120,0,0,0.35)">期</div>
<div class="t" style="top:617.2px;font-size:20px;line-height:28px;color:#fff;font-weight:bold;left:1188.0px;width:600px;text-align:center;text-shadow:0 1px 1px rgba(120,0,0,0.35)">货</div>
<div class="t" style="top:641.9px;font-size:20px;line-height:28px;color:#fff;font-weight:bold;left:1188.0px;width:600px;text-align:center;text-shadow:0 1px 1px rgba(120,0,0,0.35)">预</div>
<div class="t" style="top:666.6px;font-size:20px;line-height:28px;color:#fff;font-weight:bold;left:1188.0px;width:600px;text-align:center;text-shadow:0 1px 1px rgba(120,0,0,0.35)">约</div>
<div class="t" style="top:691.3px;font-size:20px;line-height:28px;color:#fff;font-weight:bold;left:1188.0px;width:600px;text-align:center;text-shadow:0 1px 1px rgba(120,0,0,0.35)">开</div>
<div class="t" style="top:716.0px;font-size:20px;line-height:28px;color:#fff;font-weight:bold;left:1188.0px;width:600px;text-align:center;text-shadow:0 1px 1px rgba(120,0,0,0.35)">户</div>
<div class="r" style="left:1491px;top:558px;width:23px;height:12px;background:rgba(20,40,80,0.55);"></div>
<div class="t" style="top:558.0px;font-size:9px;line-height:12px;color:#fff;left:1202.5px;width:600px;text-align:center;">广告</div>
<div class="r" style="left:1491px;top:745px;width:23px;height:12px;background:rgba(80,10,20,0.45);"></div>
<div class="t" style="top:745.0px;font-size:9px;line-height:12px;color:#fff;left:1202.5px;width:600px;text-align:center;">广告</div>
<svg style="position:absolute;left:0;top:0" width="1600" height="900">
<circle cx="1505.5" cy="398.5" r="7" fill="#cfe0fb" opacity="0.9"/><path d="M1502.5,395.5 L1508.5,401.5 M1508.5,395.5 L1502.5,401.5" stroke="#7aa0d8" stroke-width="1.1"/>
<circle cx="1506" cy="585.5" r="7" fill="#fbd0c0" opacity="0.9"/><path d="M1503,582.5 L1509,588.5 M1509,582.5 L1503,588.5" stroke="#e09080" stroke-width="1.1"/>
</svg>
<div class="r" style="left:1521px;top:637px;width:45px;height:45px;background:#d2d5d9;border:1px solid #dadde0;border-radius:2px;box-sizing:border-box"></div>
<div class="r" style="left:1454px;top:766px;width:62px;height:62px;background:#f4f4f4"></div>
<svg style="position:absolute;left:0;top:0" width="1600" height="900">
<path d="M1531,667.5 L1543,654.5 L1555,667.5" fill="none" stroke="rgba(0,0,0,0.12)" stroke-width="4" transform="translate(0,1)"/><path d="M1531,667 L1543,654 L1555,667" fill="none" stroke="#fff" stroke-width="4"/>
<path d="M1475.5,804 L1485,795 L1494.5,804" fill="none" stroke="#a8a8a8" stroke-width="1.8"/>
</svg>
</body></html>
